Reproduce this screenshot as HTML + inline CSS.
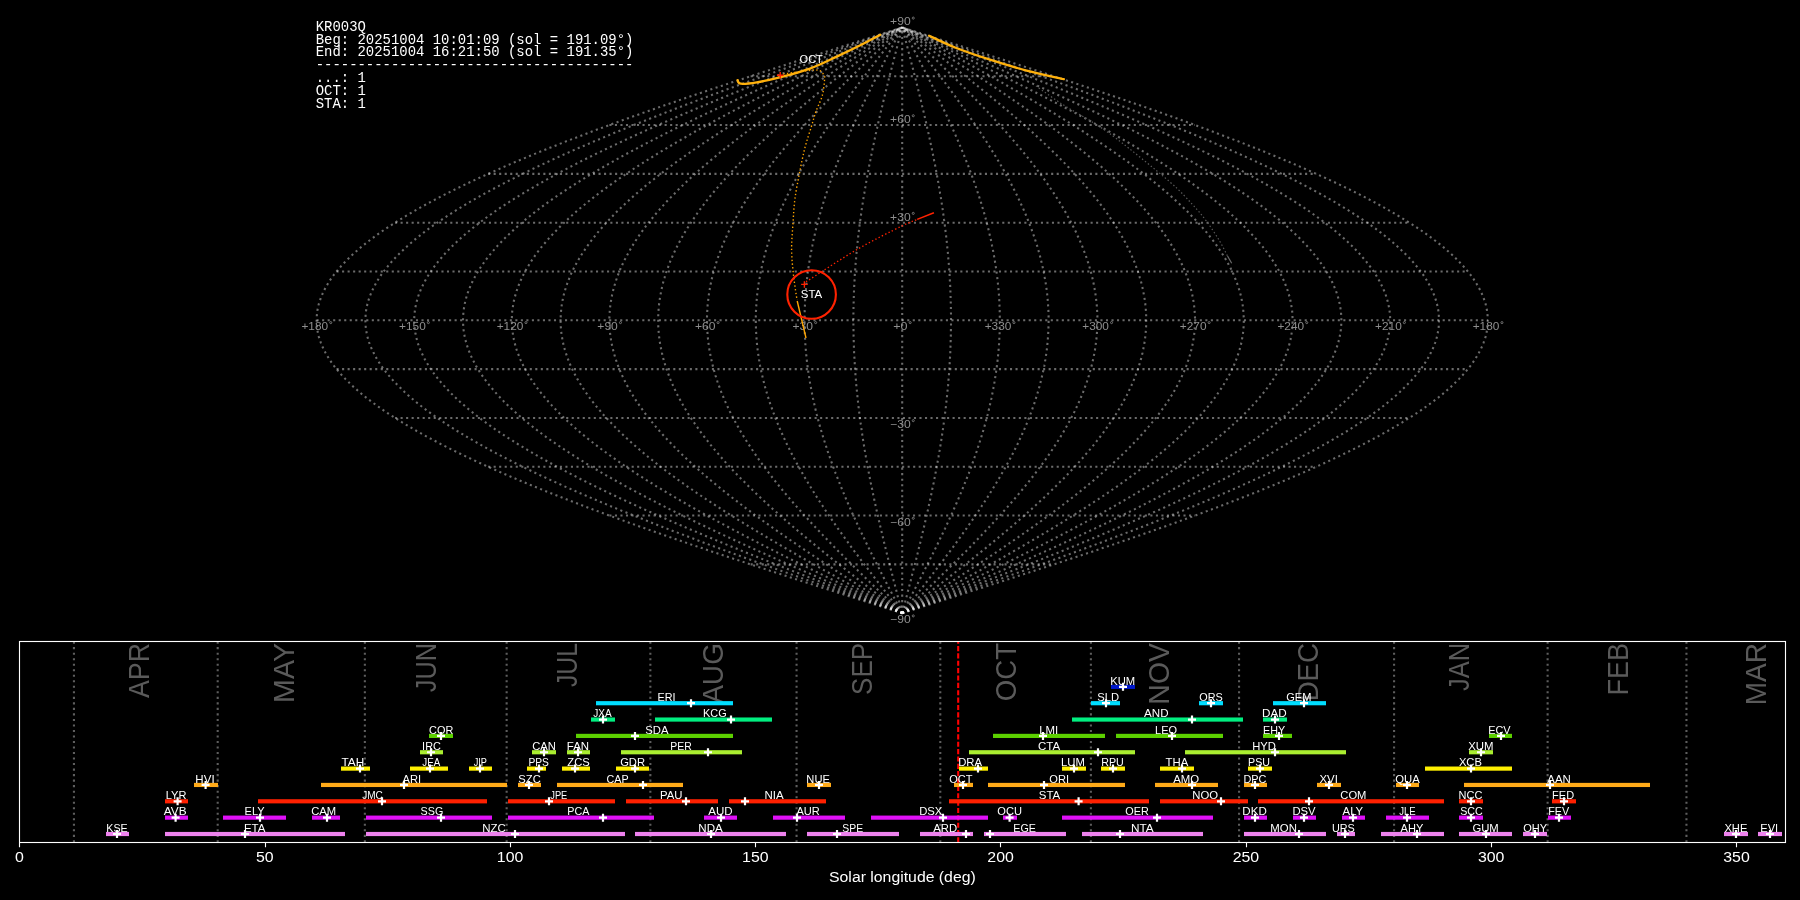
<!DOCTYPE html>
<html><head><meta charset="utf-8"><title>KR003Q</title>
<style>html,body{margin:0;padding:0;background:#000;overflow:hidden}svg{display:block;will-change:transform}</style></head>
<body><svg width="1800" height="900" viewBox="0 0 1800 900">
<rect width="1800" height="900" fill="#000"/>
<g fill="none" stroke="#ffffff" stroke-opacity="0.42" stroke-width="2.083" stroke-dasharray="2.083 3.437"><polyline points="902.2,613.2 912.4,609.9 922.6,606.7 932.8,603.4 943.0,600.2 953.2,596.9 963.4,593.7 973.6,590.4 983.7,587.2 993.8,583.9 1003.9,580.7 1013.9,577.4 1024.0,574.1 1033.9,570.9 1043.9,567.6 1053.8,564.4 1063.6,561.1 1073.4,557.9 1083.2,554.6 1092.9,551.4 1102.5,548.1 1112.1,544.9 1121.6,541.6 1131.0,538.3 1140.4,535.1 1149.7,531.8 1158.9,528.6 1168.1,525.3 1177.1,522.1 1186.1,518.8 1195.0,515.6 1203.8,512.3 1212.5,509.1 1221.1,505.8 1229.7,502.5 1238.1,499.3 1246.4,496.0 1254.6,492.8 1262.7,489.5 1270.7,486.3 1278.6,483.0 1286.4,479.8 1294.0,476.5 1301.6,473.3 1309.0,470.0 1316.3,466.8 1323.4,463.5 1330.5,460.2 1337.4,457.0 1344.2,453.7 1350.8,450.5 1357.3,447.2 1363.7,444.0 1369.9,440.7 1376.0,437.5 1381.9,434.2 1387.7,431.0 1393.3,427.7 1398.8,424.4 1404.2,421.2 1409.3,417.9 1414.4,414.7 1419.3,411.4 1424.0,408.2 1428.5,404.9 1432.9,401.7 1437.2,398.4 1441.2,395.2 1445.2,391.9 1448.9,388.6 1452.5,385.4 1455.9,382.1 1459.1,378.9 1462.2,375.6 1465.1,372.4 1467.8,369.1 1470.4,365.9 1472.8,362.6 1475.0,359.4 1477.0,356.1 1478.9,352.8 1480.6,349.6 1482.1,346.3 1483.4,343.1 1484.6,339.8 1485.6,336.6 1486.4,333.3 1487.0,330.1 1487.4,326.8 1487.7,323.6 1487.8,320.3 1487.7,317.0 1487.4,313.8 1487.0,310.5 1486.4,307.3 1485.6,304.0 1484.6,300.8 1483.4,297.5 1482.1,294.3 1480.6,291.0 1478.9,287.8 1477.0,284.5 1475.0,281.2 1472.8,278.0 1470.4,274.7 1467.8,271.5 1465.1,268.2 1462.2,265.0 1459.1,261.7 1455.9,258.5 1452.5,255.2 1448.9,252.0 1445.2,248.7 1441.2,245.4 1437.2,242.2 1432.9,238.9 1428.5,235.7 1424.0,232.4 1419.3,229.2 1414.4,225.9 1409.3,222.7 1404.2,219.4 1398.8,216.2 1393.3,212.9 1387.7,209.6 1381.9,206.4 1376.0,203.1 1369.9,199.9 1363.7,196.6 1357.3,193.4 1350.8,190.1 1344.2,186.9 1337.4,183.6 1330.5,180.4 1323.4,177.1 1316.3,173.9 1309.0,170.6 1301.6,167.3 1294.0,164.1 1286.4,160.8 1278.6,157.6 1270.7,154.3 1262.7,151.1 1254.6,147.8 1246.4,144.6 1238.1,141.3 1229.7,138.1 1221.1,134.8 1212.5,131.5 1203.8,128.3 1195.0,125.0 1186.1,121.8 1177.1,118.5 1168.1,115.3 1158.9,112.0 1149.7,108.8 1140.4,105.5 1131.0,102.3 1121.6,99.0 1112.1,95.7 1102.5,92.5 1092.9,89.2 1083.2,86.0 1073.4,82.7 1063.6,79.5 1053.8,76.2 1043.9,73.0 1033.9,69.7 1024.0,66.5 1013.9,63.2 1003.9,59.9 993.8,56.7 983.7,53.4 973.6,50.2 963.4,46.9 953.2,43.7 943.0,40.4 932.8,37.2 922.6,33.9 912.4,30.7 902.2,27.4"/><polyline points="902.2,613.2 911.6,609.9 920.9,606.7 930.3,603.4 939.6,600.2 949.0,596.9 958.3,593.7 967.6,590.4 976.9,587.2 986.2,583.9 995.4,580.7 1004.6,577.4 1013.8,574.1 1023.0,570.9 1032.1,567.6 1041.1,564.4 1050.2,561.1 1059.1,557.9 1068.1,554.6 1077.0,551.4 1085.8,548.1 1094.6,544.9 1103.3,541.6 1111.9,538.3 1120.5,535.1 1129.1,531.8 1137.5,528.6 1145.9,525.3 1154.2,522.1 1162.4,518.8 1170.6,515.6 1178.7,512.3 1186.7,509.1 1194.6,505.8 1202.4,502.5 1210.1,499.3 1217.7,496.0 1225.3,492.8 1232.7,489.5 1240.0,486.3 1247.2,483.0 1254.4,479.8 1261.4,476.5 1268.3,473.3 1275.1,470.0 1281.8,466.8 1288.3,463.5 1294.8,460.2 1301.1,457.0 1307.3,453.7 1313.4,450.5 1319.4,447.2 1325.2,444.0 1330.9,440.7 1336.5,437.5 1341.9,434.2 1347.2,431.0 1352.4,427.7 1357.4,424.4 1362.3,421.2 1367.1,417.9 1371.7,414.7 1376.2,411.4 1380.5,408.2 1384.7,404.9 1388.7,401.7 1392.6,398.4 1396.3,395.2 1399.9,391.9 1403.3,388.6 1406.6,385.4 1409.8,382.1 1412.7,378.9 1415.5,375.6 1418.2,372.4 1420.7,369.1 1423.1,365.9 1425.2,362.6 1427.3,359.4 1429.1,356.1 1430.8,352.8 1432.4,349.6 1433.8,346.3 1435.0,343.1 1436.1,339.8 1437.0,336.6 1437.7,333.3 1438.3,330.1 1438.7,326.8 1438.9,323.6 1439.0,320.3 1438.9,317.0 1438.7,313.8 1438.3,310.5 1437.7,307.3 1437.0,304.0 1436.1,300.8 1435.0,297.5 1433.8,294.3 1432.4,291.0 1430.8,287.8 1429.1,284.5 1427.3,281.2 1425.2,278.0 1423.1,274.7 1420.7,271.5 1418.2,268.2 1415.5,265.0 1412.7,261.7 1409.8,258.5 1406.6,255.2 1403.3,252.0 1399.9,248.7 1396.3,245.4 1392.6,242.2 1388.7,238.9 1384.7,235.7 1380.5,232.4 1376.2,229.2 1371.7,225.9 1367.1,222.7 1362.3,219.4 1357.4,216.2 1352.4,212.9 1347.2,209.6 1341.9,206.4 1336.5,203.1 1330.9,199.9 1325.2,196.6 1319.4,193.4 1313.4,190.1 1307.3,186.9 1301.1,183.6 1294.8,180.4 1288.3,177.1 1281.8,173.9 1275.1,170.6 1268.3,167.3 1261.4,164.1 1254.4,160.8 1247.2,157.6 1240.0,154.3 1232.7,151.1 1225.3,147.8 1217.7,144.6 1210.1,141.3 1202.4,138.1 1194.6,134.8 1186.7,131.5 1178.7,128.3 1170.6,125.0 1162.4,121.8 1154.2,118.5 1145.9,115.3 1137.5,112.0 1129.1,108.8 1120.5,105.5 1111.9,102.3 1103.3,99.0 1094.6,95.7 1085.8,92.5 1077.0,89.2 1068.1,86.0 1059.1,82.7 1050.2,79.5 1041.1,76.2 1032.1,73.0 1023.0,69.7 1013.8,66.5 1004.6,63.2 995.4,59.9 986.2,56.7 976.9,53.4 967.6,50.2 958.3,46.9 949.0,43.7 939.6,40.4 930.3,37.2 920.9,33.9 911.6,30.7 902.2,27.4"/><polyline points="902.2,613.2 910.7,609.9 919.2,606.7 927.7,603.4 936.2,600.2 944.7,596.9 953.2,593.7 961.7,590.4 970.1,587.2 978.5,583.9 986.9,580.7 995.3,577.4 1003.7,574.1 1012.0,570.9 1020.3,567.6 1028.5,564.4 1036.7,561.1 1044.9,557.9 1053.0,554.6 1061.1,551.4 1069.1,548.1 1077.1,544.9 1085.0,541.6 1092.9,538.3 1100.7,535.1 1108.4,531.8 1116.1,528.6 1123.7,525.3 1131.3,522.1 1138.8,518.8 1146.2,515.6 1153.5,512.3 1160.8,509.1 1168.0,505.8 1175.1,502.5 1182.1,499.3 1189.0,496.0 1195.9,492.8 1202.6,489.5 1209.3,486.3 1215.9,483.0 1222.4,479.8 1228.7,476.5 1235.0,473.3 1241.2,470.0 1247.3,466.8 1253.2,463.5 1259.1,460.2 1264.9,457.0 1270.5,453.7 1276.0,450.5 1281.4,447.2 1286.7,444.0 1291.9,440.7 1297.0,437.5 1301.9,434.2 1306.8,431.0 1311.5,427.7 1316.0,424.4 1320.5,421.2 1324.8,417.9 1329.0,414.7 1333.1,411.4 1337.0,408.2 1340.8,404.9 1344.5,401.7 1348.0,398.4 1351.4,395.2 1354.7,391.9 1357.8,388.6 1360.8,385.4 1363.6,382.1 1366.3,378.9 1368.9,375.6 1371.3,372.4 1373.6,369.1 1375.7,365.9 1377.7,362.6 1379.5,359.4 1381.2,356.1 1382.8,352.8 1384.2,349.6 1385.5,346.3 1386.6,343.1 1387.5,339.8 1388.3,336.6 1389.0,333.3 1389.5,330.1 1389.9,326.8 1390.1,323.6 1390.2,320.3 1390.1,317.0 1389.9,313.8 1389.5,310.5 1389.0,307.3 1388.3,304.0 1387.5,300.8 1386.6,297.5 1385.5,294.3 1384.2,291.0 1382.8,287.8 1381.2,284.5 1379.5,281.2 1377.7,278.0 1375.7,274.7 1373.6,271.5 1371.3,268.2 1368.9,265.0 1366.3,261.7 1363.6,258.5 1360.8,255.2 1357.8,252.0 1354.7,248.7 1351.4,245.4 1348.0,242.2 1344.5,238.9 1340.8,235.7 1337.0,232.4 1333.1,229.2 1329.0,225.9 1324.8,222.7 1320.5,219.4 1316.0,216.2 1311.5,212.9 1306.8,209.6 1301.9,206.4 1297.0,203.1 1291.9,199.9 1286.7,196.6 1281.4,193.4 1276.0,190.1 1270.5,186.9 1264.9,183.6 1259.1,180.4 1253.2,177.1 1247.3,173.9 1241.2,170.6 1235.0,167.3 1228.7,164.1 1222.4,160.8 1215.9,157.6 1209.3,154.3 1202.6,151.1 1195.9,147.8 1189.0,144.6 1182.1,141.3 1175.1,138.1 1168.0,134.8 1160.8,131.5 1153.5,128.3 1146.2,125.0 1138.8,121.8 1131.3,118.5 1123.7,115.3 1116.1,112.0 1108.4,108.8 1100.7,105.5 1092.9,102.3 1085.0,99.0 1077.1,95.7 1069.1,92.5 1061.1,89.2 1053.0,86.0 1044.9,82.7 1036.7,79.5 1028.5,76.2 1020.3,73.0 1012.0,69.7 1003.7,66.5 995.3,63.2 986.9,59.9 978.5,56.7 970.1,53.4 961.7,50.2 953.2,46.9 944.7,43.7 936.2,40.4 927.7,37.2 919.2,33.9 910.7,30.7 902.2,27.4"/><polyline points="902.2,613.2 909.9,609.9 917.5,606.7 925.2,603.4 932.8,600.2 940.5,596.9 948.1,593.7 955.7,590.4 963.3,587.2 970.9,583.9 978.5,580.7 986.0,577.4 993.5,574.1 1001.0,570.9 1008.5,567.6 1015.9,564.4 1023.3,561.1 1030.6,557.9 1037.9,554.6 1045.2,551.4 1052.4,548.1 1059.6,544.9 1066.7,541.6 1073.8,538.3 1080.8,535.1 1087.8,531.8 1094.7,528.6 1101.6,525.3 1108.4,522.1 1115.1,518.8 1121.8,515.6 1128.4,512.3 1134.9,509.1 1141.4,505.8 1147.8,502.5 1154.1,499.3 1160.4,496.0 1166.5,492.8 1172.6,489.5 1178.6,486.3 1184.5,483.0 1190.3,479.8 1196.1,476.5 1201.7,473.3 1207.3,470.0 1212.8,466.8 1218.1,463.5 1223.4,460.2 1228.6,457.0 1233.7,453.7 1238.6,450.5 1243.5,447.2 1248.3,444.0 1253.0,440.7 1257.5,437.5 1262.0,434.2 1266.3,431.0 1270.5,427.7 1274.7,424.4 1278.7,421.2 1282.6,417.9 1286.3,414.7 1290.0,411.4 1293.5,408.2 1297.0,404.9 1300.3,401.7 1303.4,398.4 1306.5,395.2 1309.4,391.9 1312.2,388.6 1314.9,385.4 1317.5,382.1 1319.9,378.9 1322.2,375.6 1324.4,372.4 1326.4,369.1 1328.4,365.9 1330.1,362.6 1331.8,359.4 1333.3,356.1 1334.7,352.8 1336.0,349.6 1337.1,346.3 1338.1,343.1 1339.0,339.8 1339.7,336.6 1340.3,333.3 1340.8,330.1 1341.1,326.8 1341.3,323.6 1341.4,320.3 1341.3,317.0 1341.1,313.8 1340.8,310.5 1340.3,307.3 1339.7,304.0 1339.0,300.8 1338.1,297.5 1337.1,294.3 1336.0,291.0 1334.7,287.8 1333.3,284.5 1331.8,281.2 1330.1,278.0 1328.4,274.7 1326.4,271.5 1324.4,268.2 1322.2,265.0 1319.9,261.7 1317.5,258.5 1314.9,255.2 1312.2,252.0 1309.4,248.7 1306.5,245.4 1303.4,242.2 1300.3,238.9 1297.0,235.7 1293.5,232.4 1290.0,229.2 1286.3,225.9 1282.6,222.7 1278.7,219.4 1274.7,216.2 1270.5,212.9 1266.3,209.6 1262.0,206.4 1257.5,203.1 1253.0,199.9 1248.3,196.6 1243.5,193.4 1238.6,190.1 1233.7,186.9 1228.6,183.6 1223.4,180.4 1218.1,177.1 1212.8,173.9 1207.3,170.6 1201.7,167.3 1196.1,164.1 1190.3,160.8 1184.5,157.6 1178.6,154.3 1172.6,151.1 1166.5,147.8 1160.4,144.6 1154.1,141.3 1147.8,138.1 1141.4,134.8 1134.9,131.5 1128.4,128.3 1121.8,125.0 1115.1,121.8 1108.4,118.5 1101.6,115.3 1094.7,112.0 1087.8,108.8 1080.8,105.5 1073.8,102.3 1066.7,99.0 1059.6,95.7 1052.4,92.5 1045.2,89.2 1037.9,86.0 1030.6,82.7 1023.3,79.5 1015.9,76.2 1008.5,73.0 1001.0,69.7 993.5,66.5 986.0,63.2 978.5,59.9 970.9,56.7 963.3,53.4 955.7,50.2 948.1,46.9 940.5,43.7 932.8,40.4 925.2,37.2 917.5,33.9 909.9,30.7 902.2,27.4"/><polyline points="902.2,613.2 909.0,609.9 915.8,606.7 922.6,603.4 929.4,600.2 936.2,596.9 943.0,593.7 949.8,590.4 956.5,587.2 963.3,583.9 970.0,580.7 976.7,577.4 983.4,574.1 990.0,570.9 996.6,567.6 1003.2,564.4 1009.8,561.1 1016.3,557.9 1022.8,554.6 1029.3,551.4 1035.7,548.1 1042.1,544.9 1048.4,541.6 1054.7,538.3 1061.0,535.1 1067.2,531.8 1073.3,528.6 1079.4,525.3 1085.5,522.1 1091.5,518.8 1097.4,515.6 1103.3,512.3 1109.1,509.1 1114.8,505.8 1120.5,502.5 1126.1,499.3 1131.7,496.0 1137.1,492.8 1142.6,489.5 1147.9,486.3 1153.1,483.0 1158.3,479.8 1163.4,476.5 1168.5,473.3 1173.4,470.0 1178.3,466.8 1183.0,463.5 1187.7,460.2 1192.3,457.0 1196.8,453.7 1201.3,450.5 1205.6,447.2 1209.8,444.0 1214.0,440.7 1218.0,437.5 1222.0,434.2 1225.9,431.0 1229.6,427.7 1233.3,424.4 1236.8,421.2 1240.3,417.9 1243.7,414.7 1246.9,411.4 1250.0,408.2 1253.1,404.9 1256.0,401.7 1258.8,398.4 1261.6,395.2 1264.2,391.9 1266.7,388.6 1269.1,385.4 1271.3,382.1 1273.5,378.9 1275.5,375.6 1277.5,372.4 1279.3,369.1 1281.0,365.9 1282.6,362.6 1284.1,359.4 1285.4,356.1 1286.7,352.8 1287.8,349.6 1288.8,346.3 1289.7,343.1 1290.5,339.8 1291.1,336.6 1291.6,333.3 1292.1,330.1 1292.4,326.8 1292.5,323.6 1292.6,320.3 1292.5,317.0 1292.4,313.8 1292.1,310.5 1291.6,307.3 1291.1,304.0 1290.5,300.8 1289.7,297.5 1288.8,294.3 1287.8,291.0 1286.7,287.8 1285.4,284.5 1284.1,281.2 1282.6,278.0 1281.0,274.7 1279.3,271.5 1277.5,268.2 1275.5,265.0 1273.5,261.7 1271.3,258.5 1269.1,255.2 1266.7,252.0 1264.2,248.7 1261.6,245.4 1258.8,242.2 1256.0,238.9 1253.1,235.7 1250.0,232.4 1246.9,229.2 1243.7,225.9 1240.3,222.7 1236.8,219.4 1233.3,216.2 1229.6,212.9 1225.9,209.6 1222.0,206.4 1218.0,203.1 1214.0,199.9 1209.8,196.6 1205.6,193.4 1201.3,190.1 1196.8,186.9 1192.3,183.6 1187.7,180.4 1183.0,177.1 1178.3,173.9 1173.4,170.6 1168.5,167.3 1163.4,164.1 1158.3,160.8 1153.1,157.6 1147.9,154.3 1142.6,151.1 1137.1,147.8 1131.7,144.6 1126.1,141.3 1120.5,138.1 1114.8,134.8 1109.1,131.5 1103.3,128.3 1097.4,125.0 1091.5,121.8 1085.5,118.5 1079.4,115.3 1073.3,112.0 1067.2,108.8 1061.0,105.5 1054.7,102.3 1048.4,99.0 1042.1,95.7 1035.7,92.5 1029.3,89.2 1022.8,86.0 1016.3,82.7 1009.8,79.5 1003.2,76.2 996.6,73.0 990.0,69.7 983.4,66.5 976.7,63.2 970.0,59.9 963.3,56.7 956.5,53.4 949.8,50.2 943.0,46.9 936.2,43.7 929.4,40.4 922.6,37.2 915.8,33.9 909.0,30.7 902.2,27.4"/><polyline points="902.2,613.2 908.2,609.9 914.1,606.7 920.1,603.4 926.0,600.2 932.0,596.9 937.9,593.7 943.8,590.4 949.7,587.2 955.6,583.9 961.5,580.7 967.4,577.4 973.2,574.1 979.0,570.9 984.8,567.6 990.6,564.4 996.4,561.1 1002.1,557.9 1007.8,554.6 1013.4,551.4 1019.0,548.1 1024.6,544.9 1030.2,541.6 1035.7,538.3 1041.1,535.1 1046.6,531.8 1051.9,528.6 1057.3,525.3 1062.6,522.1 1067.8,518.8 1073.0,515.6 1078.1,512.3 1083.2,509.1 1088.2,505.8 1093.2,502.5 1098.1,499.3 1103.0,496.0 1107.8,492.8 1112.5,489.5 1117.2,486.3 1121.8,483.0 1126.3,479.8 1130.8,476.5 1135.2,473.3 1139.5,470.0 1143.7,466.8 1147.9,463.5 1152.0,460.2 1156.1,457.0 1160.0,453.7 1163.9,450.5 1167.7,447.2 1171.4,444.0 1175.0,440.7 1178.6,437.5 1182.0,434.2 1185.4,431.0 1188.7,427.7 1191.9,424.4 1195.0,421.2 1198.0,417.9 1201.0,414.7 1203.8,411.4 1206.6,408.2 1209.2,404.9 1211.8,401.7 1214.3,398.4 1216.6,395.2 1218.9,391.9 1221.1,388.6 1223.2,385.4 1225.2,382.1 1227.1,378.9 1228.9,375.6 1230.6,372.4 1232.2,369.1 1233.7,365.9 1235.0,362.6 1236.3,359.4 1237.5,356.1 1238.6,352.8 1239.6,349.6 1240.5,346.3 1241.3,343.1 1241.9,339.8 1242.5,336.6 1243.0,333.3 1243.3,330.1 1243.6,326.8 1243.7,323.6 1243.8,320.3 1243.7,317.0 1243.6,313.8 1243.3,310.5 1243.0,307.3 1242.5,304.0 1241.9,300.8 1241.3,297.5 1240.5,294.3 1239.6,291.0 1238.6,287.8 1237.5,284.5 1236.3,281.2 1235.0,278.0 1233.7,274.7 1232.2,271.5 1230.6,268.2 1228.9,265.0 1227.1,261.7 1225.2,258.5 1223.2,255.2 1221.1,252.0 1218.9,248.7 1216.6,245.4 1214.3,242.2 1211.8,238.9 1209.2,235.7 1206.6,232.4 1203.8,229.2 1201.0,225.9 1198.0,222.7 1195.0,219.4 1191.9,216.2 1188.7,212.9 1185.4,209.6 1182.0,206.4 1178.6,203.1 1175.0,199.9 1171.4,196.6 1167.7,193.4 1163.9,190.1 1160.0,186.9 1156.1,183.6 1152.0,180.4 1147.9,177.1 1143.7,173.9 1139.5,170.6 1135.2,167.3 1130.8,164.1 1126.3,160.8 1121.8,157.6 1117.2,154.3 1112.5,151.1 1107.8,147.8 1103.0,144.6 1098.1,141.3 1093.2,138.1 1088.2,134.8 1083.2,131.5 1078.1,128.3 1073.0,125.0 1067.8,121.8 1062.6,118.5 1057.3,115.3 1051.9,112.0 1046.6,108.8 1041.1,105.5 1035.7,102.3 1030.2,99.0 1024.6,95.7 1019.0,92.5 1013.4,89.2 1007.8,86.0 1002.1,82.7 996.4,79.5 990.6,76.2 984.8,73.0 979.0,69.7 973.2,66.5 967.4,63.2 961.5,59.9 955.6,56.7 949.7,53.4 943.8,50.2 937.9,46.9 932.0,43.7 926.0,40.4 920.1,37.2 914.1,33.9 908.2,30.7 902.2,27.4"/><polyline points="902.2,613.2 907.3,609.9 912.4,606.7 917.5,603.4 922.6,600.2 927.7,596.9 932.8,593.7 937.9,590.4 942.9,587.2 948.0,583.9 953.0,580.7 958.1,577.4 963.1,574.1 968.1,570.9 973.0,567.6 978.0,564.4 982.9,561.1 987.8,557.9 992.7,554.6 997.5,551.4 1002.3,548.1 1007.1,544.9 1011.9,541.6 1016.6,538.3 1021.3,535.1 1025.9,531.8 1030.6,528.6 1035.1,525.3 1039.7,522.1 1044.2,518.8 1048.6,515.6 1053.0,512.3 1057.4,509.1 1061.7,505.8 1065.9,502.5 1070.1,499.3 1074.3,496.0 1078.4,492.8 1082.5,489.5 1086.5,486.3 1090.4,483.0 1094.3,479.8 1098.1,476.5 1101.9,473.3 1105.6,470.0 1109.2,466.8 1112.8,463.5 1116.3,460.2 1119.8,457.0 1123.2,453.7 1126.5,450.5 1129.7,447.2 1132.9,444.0 1136.0,440.7 1139.1,437.5 1142.0,434.2 1144.9,431.0 1147.8,427.7 1150.5,424.4 1153.2,421.2 1155.8,417.9 1158.3,414.7 1160.7,411.4 1163.1,408.2 1165.4,404.9 1167.6,401.7 1169.7,398.4 1171.7,395.2 1173.7,391.9 1175.6,388.6 1177.3,385.4 1179.0,382.1 1180.7,378.9 1182.2,375.6 1183.7,372.4 1185.0,369.1 1186.3,365.9 1187.5,362.6 1188.6,359.4 1189.6,356.1 1190.6,352.8 1191.4,349.6 1192.2,346.3 1192.8,343.1 1193.4,339.8 1193.9,336.6 1194.3,333.3 1194.6,330.1 1194.8,326.8 1195.0,323.6 1195.0,320.3 1195.0,317.0 1194.8,313.8 1194.6,310.5 1194.3,307.3 1193.9,304.0 1193.4,300.8 1192.8,297.5 1192.2,294.3 1191.4,291.0 1190.6,287.8 1189.6,284.5 1188.6,281.2 1187.5,278.0 1186.3,274.7 1185.0,271.5 1183.7,268.2 1182.2,265.0 1180.7,261.7 1179.0,258.5 1177.3,255.2 1175.6,252.0 1173.7,248.7 1171.7,245.4 1169.7,242.2 1167.6,238.9 1165.4,235.7 1163.1,232.4 1160.7,229.2 1158.3,225.9 1155.8,222.7 1153.2,219.4 1150.5,216.2 1147.8,212.9 1144.9,209.6 1142.0,206.4 1139.1,203.1 1136.0,199.9 1132.9,196.6 1129.7,193.4 1126.5,190.1 1123.2,186.9 1119.8,183.6 1116.3,180.4 1112.8,177.1 1109.2,173.9 1105.6,170.6 1101.9,167.3 1098.1,164.1 1094.3,160.8 1090.4,157.6 1086.5,154.3 1082.5,151.1 1078.4,147.8 1074.3,144.6 1070.1,141.3 1065.9,138.1 1061.7,134.8 1057.4,131.5 1053.0,128.3 1048.6,125.0 1044.2,121.8 1039.7,118.5 1035.1,115.3 1030.6,112.0 1025.9,108.8 1021.3,105.5 1016.6,102.3 1011.9,99.0 1007.1,95.7 1002.3,92.5 997.5,89.2 992.7,86.0 987.8,82.7 982.9,79.5 978.0,76.2 973.0,73.0 968.1,69.7 963.1,66.5 958.1,63.2 953.0,59.9 948.0,56.7 942.9,53.4 937.9,50.2 932.8,46.9 927.7,43.7 922.6,40.4 917.5,37.2 912.4,33.9 907.3,30.7 902.2,27.4"/><polyline points="902.2,613.2 906.5,609.9 910.7,606.7 915.0,603.4 919.2,600.2 923.5,596.9 927.7,593.7 931.9,590.4 936.2,587.2 940.4,583.9 944.6,580.7 948.8,577.4 952.9,574.1 957.1,570.9 961.2,567.6 965.4,564.4 969.5,561.1 973.5,557.9 977.6,554.6 981.6,551.4 985.7,548.1 989.6,544.9 993.6,541.6 997.5,538.3 1001.4,535.1 1005.3,531.8 1009.2,528.6 1013.0,525.3 1016.8,522.1 1020.5,518.8 1024.2,515.6 1027.9,512.3 1031.5,509.1 1035.1,505.8 1038.6,502.5 1042.2,499.3 1045.6,496.0 1049.0,492.8 1052.4,489.5 1055.8,486.3 1059.0,483.0 1062.3,479.8 1065.5,476.5 1068.6,473.3 1071.7,470.0 1074.7,466.8 1077.7,463.5 1080.7,460.2 1083.5,457.0 1086.3,453.7 1089.1,450.5 1091.8,447.2 1094.5,444.0 1097.1,440.7 1099.6,437.5 1102.1,434.2 1104.5,431.0 1106.8,427.7 1109.1,424.4 1111.3,421.2 1113.5,417.9 1115.6,414.7 1117.6,411.4 1119.6,408.2 1121.5,404.9 1123.3,401.7 1125.1,398.4 1126.8,395.2 1128.4,391.9 1130.0,388.6 1131.5,385.4 1132.9,382.1 1134.3,378.9 1135.5,375.6 1136.7,372.4 1137.9,369.1 1139.0,365.9 1139.9,362.6 1140.9,359.4 1141.7,356.1 1142.5,352.8 1143.2,349.6 1143.8,346.3 1144.4,343.1 1144.9,339.8 1145.3,336.6 1145.6,333.3 1145.9,330.1 1146.1,326.8 1146.2,323.6 1146.2,320.3 1146.2,317.0 1146.1,313.8 1145.9,310.5 1145.6,307.3 1145.3,304.0 1144.9,300.8 1144.4,297.5 1143.8,294.3 1143.2,291.0 1142.5,287.8 1141.7,284.5 1140.9,281.2 1139.9,278.0 1139.0,274.7 1137.9,271.5 1136.7,268.2 1135.5,265.0 1134.3,261.7 1132.9,258.5 1131.5,255.2 1130.0,252.0 1128.4,248.7 1126.8,245.4 1125.1,242.2 1123.3,238.9 1121.5,235.7 1119.6,232.4 1117.6,229.2 1115.6,225.9 1113.5,222.7 1111.3,219.4 1109.1,216.2 1106.8,212.9 1104.5,209.6 1102.1,206.4 1099.6,203.1 1097.1,199.9 1094.5,196.6 1091.8,193.4 1089.1,190.1 1086.3,186.9 1083.5,183.6 1080.7,180.4 1077.7,177.1 1074.7,173.9 1071.7,170.6 1068.6,167.3 1065.5,164.1 1062.3,160.8 1059.0,157.6 1055.8,154.3 1052.4,151.1 1049.0,147.8 1045.6,144.6 1042.2,141.3 1038.6,138.1 1035.1,134.8 1031.5,131.5 1027.9,128.3 1024.2,125.0 1020.5,121.8 1016.8,118.5 1013.0,115.3 1009.2,112.0 1005.3,108.8 1001.4,105.5 997.5,102.3 993.6,99.0 989.6,95.7 985.7,92.5 981.6,89.2 977.6,86.0 973.5,82.7 969.5,79.5 965.4,76.2 961.2,73.0 957.1,69.7 952.9,66.5 948.8,63.2 944.6,59.9 940.4,56.7 936.2,53.4 931.9,50.2 927.7,46.9 923.5,43.7 919.2,40.4 915.0,37.2 910.7,33.9 906.5,30.7 902.2,27.4"/><polyline points="902.2,613.2 905.6,609.9 909.0,606.7 912.4,603.4 915.8,600.2 919.2,596.9 922.6,593.7 926.0,590.4 929.4,587.2 932.7,583.9 936.1,580.7 939.4,577.4 942.8,574.1 946.1,570.9 949.4,567.6 952.7,564.4 956.0,561.1 959.3,557.9 962.5,554.6 965.8,551.4 969.0,548.1 972.2,544.9 975.3,541.6 978.5,538.3 981.6,535.1 984.7,531.8 987.8,528.6 990.8,525.3 993.8,522.1 996.8,518.8 999.8,515.6 1002.7,512.3 1005.6,509.1 1008.5,505.8 1011.4,502.5 1014.2,499.3 1016.9,496.0 1019.7,492.8 1022.4,489.5 1025.0,486.3 1027.7,483.0 1030.3,479.8 1032.8,476.5 1035.3,473.3 1037.8,470.0 1040.2,466.8 1042.6,463.5 1045.0,460.2 1047.3,457.0 1049.5,453.7 1051.7,450.5 1053.9,447.2 1056.0,444.0 1058.1,440.7 1060.1,437.5 1062.1,434.2 1064.0,431.0 1065.9,427.7 1067.7,424.4 1069.5,421.2 1071.2,417.9 1072.9,414.7 1074.6,411.4 1076.1,408.2 1077.6,404.9 1079.1,401.7 1080.5,398.4 1081.9,395.2 1083.2,391.9 1084.4,388.6 1085.6,385.4 1086.8,382.1 1087.8,378.9 1088.9,375.6 1089.8,372.4 1090.7,369.1 1091.6,365.9 1092.4,362.6 1093.1,359.4 1093.8,356.1 1094.4,352.8 1095.0,349.6 1095.5,346.3 1095.9,343.1 1096.3,339.8 1096.7,336.6 1096.9,333.3 1097.1,330.1 1097.3,326.8 1097.4,323.6 1097.4,320.3 1097.4,317.0 1097.3,313.8 1097.1,310.5 1096.9,307.3 1096.7,304.0 1096.3,300.8 1095.9,297.5 1095.5,294.3 1095.0,291.0 1094.4,287.8 1093.8,284.5 1093.1,281.2 1092.4,278.0 1091.6,274.7 1090.7,271.5 1089.8,268.2 1088.9,265.0 1087.8,261.7 1086.8,258.5 1085.6,255.2 1084.4,252.0 1083.2,248.7 1081.9,245.4 1080.5,242.2 1079.1,238.9 1077.6,235.7 1076.1,232.4 1074.6,229.2 1072.9,225.9 1071.2,222.7 1069.5,219.4 1067.7,216.2 1065.9,212.9 1064.0,209.6 1062.1,206.4 1060.1,203.1 1058.1,199.9 1056.0,196.6 1053.9,193.4 1051.7,190.1 1049.5,186.9 1047.3,183.6 1045.0,180.4 1042.6,177.1 1040.2,173.9 1037.8,170.6 1035.3,167.3 1032.8,164.1 1030.3,160.8 1027.7,157.6 1025.0,154.3 1022.4,151.1 1019.7,147.8 1016.9,144.6 1014.2,141.3 1011.4,138.1 1008.5,134.8 1005.6,131.5 1002.7,128.3 999.8,125.0 996.8,121.8 993.8,118.5 990.8,115.3 987.8,112.0 984.7,108.8 981.6,105.5 978.5,102.3 975.3,99.0 972.2,95.7 969.0,92.5 965.8,89.2 962.5,86.0 959.3,82.7 956.0,79.5 952.7,76.2 949.4,73.0 946.1,69.7 942.8,66.5 939.4,63.2 936.1,59.9 932.7,56.7 929.4,53.4 926.0,50.2 922.6,46.9 919.2,43.7 915.8,40.4 912.4,37.2 909.0,33.9 905.6,30.7 902.2,27.4"/><polyline points="902.2,613.2 904.8,609.9 907.3,606.7 909.9,603.4 912.4,600.2 915.0,596.9 917.5,593.7 920.0,590.4 922.6,587.2 925.1,583.9 927.6,580.7 930.1,577.4 932.6,574.1 935.1,570.9 937.6,567.6 940.1,564.4 942.6,561.1 945.0,557.9 947.4,554.6 949.9,551.4 952.3,548.1 954.7,544.9 957.0,541.6 959.4,538.3 961.7,535.1 964.1,531.8 966.4,528.6 968.7,525.3 970.9,522.1 973.2,518.8 975.4,515.6 977.6,512.3 979.8,509.1 981.9,505.8 984.1,502.5 986.2,499.3 988.3,496.0 990.3,492.8 992.3,489.5 994.3,486.3 996.3,483.0 998.2,479.8 1000.2,476.5 1002.0,473.3 1003.9,470.0 1005.7,466.8 1007.5,463.5 1009.3,460.2 1011.0,457.0 1012.7,453.7 1014.3,450.5 1016.0,447.2 1017.6,444.0 1019.1,440.7 1020.6,437.5 1022.1,434.2 1023.6,431.0 1025.0,427.7 1026.4,424.4 1027.7,421.2 1029.0,417.9 1030.2,414.7 1031.5,411.4 1032.6,408.2 1033.8,404.9 1034.9,401.7 1035.9,398.4 1037.0,395.2 1037.9,391.9 1038.9,388.6 1039.8,385.4 1040.6,382.1 1041.4,378.9 1042.2,375.6 1042.9,372.4 1043.6,369.1 1044.3,365.9 1044.8,362.6 1045.4,359.4 1045.9,356.1 1046.4,352.8 1046.8,349.6 1047.2,346.3 1047.5,343.1 1047.8,339.8 1048.0,336.6 1048.2,333.3 1048.4,330.1 1048.5,326.8 1048.6,323.6 1048.6,320.3 1048.6,317.0 1048.5,313.8 1048.4,310.5 1048.2,307.3 1048.0,304.0 1047.8,300.8 1047.5,297.5 1047.2,294.3 1046.8,291.0 1046.4,287.8 1045.9,284.5 1045.4,281.2 1044.8,278.0 1044.3,274.7 1043.6,271.5 1042.9,268.2 1042.2,265.0 1041.4,261.7 1040.6,258.5 1039.8,255.2 1038.9,252.0 1037.9,248.7 1037.0,245.4 1035.9,242.2 1034.9,238.9 1033.8,235.7 1032.6,232.4 1031.5,229.2 1030.2,225.9 1029.0,222.7 1027.7,219.4 1026.4,216.2 1025.0,212.9 1023.6,209.6 1022.1,206.4 1020.6,203.1 1019.1,199.9 1017.6,196.6 1016.0,193.4 1014.3,190.1 1012.7,186.9 1011.0,183.6 1009.3,180.4 1007.5,177.1 1005.7,173.9 1003.9,170.6 1002.0,167.3 1000.2,164.1 998.2,160.8 996.3,157.6 994.3,154.3 992.3,151.1 990.3,147.8 988.3,144.6 986.2,141.3 984.1,138.1 981.9,134.8 979.8,131.5 977.6,128.3 975.4,125.0 973.2,121.8 970.9,118.5 968.7,115.3 966.4,112.0 964.1,108.8 961.7,105.5 959.4,102.3 957.0,99.0 954.7,95.7 952.3,92.5 949.9,89.2 947.4,86.0 945.0,82.7 942.6,79.5 940.1,76.2 937.6,73.0 935.1,69.7 932.6,66.5 930.1,63.2 927.6,59.9 925.1,56.7 922.6,53.4 920.0,50.2 917.5,46.9 915.0,43.7 912.4,40.4 909.9,37.2 907.3,33.9 904.8,30.7 902.2,27.4"/><polyline points="902.2,613.2 903.9,609.9 905.6,606.7 907.3,603.4 909.0,600.2 910.7,596.9 912.4,593.7 914.1,590.4 915.8,587.2 917.5,583.9 919.1,580.7 920.8,577.4 922.5,574.1 924.2,570.9 925.8,567.6 927.5,564.4 929.1,561.1 930.7,557.9 932.4,554.6 934.0,551.4 935.6,548.1 937.2,544.9 938.8,541.6 940.3,538.3 941.9,535.1 943.4,531.8 945.0,528.6 946.5,525.3 948.0,522.1 949.5,518.8 951.0,515.6 952.5,512.3 953.9,509.1 955.4,505.8 956.8,502.5 958.2,499.3 959.6,496.0 960.9,492.8 962.3,489.5 963.6,486.3 964.9,483.0 966.2,479.8 967.5,476.5 968.8,473.3 970.0,470.0 971.2,466.8 972.4,463.5 973.6,460.2 974.7,457.0 975.9,453.7 977.0,450.5 978.0,447.2 979.1,444.0 980.1,440.7 981.2,437.5 982.1,434.2 983.1,431.0 984.1,427.7 985.0,424.4 985.9,421.2 986.7,417.9 987.6,414.7 988.4,411.4 989.2,408.2 989.9,404.9 990.7,401.7 991.4,398.4 992.0,395.2 992.7,391.9 993.3,388.6 993.9,385.4 994.5,382.1 995.0,378.9 995.5,375.6 996.0,372.4 996.5,369.1 996.9,365.9 997.3,362.6 997.7,359.4 998.0,356.1 998.3,352.8 998.6,349.6 998.9,346.3 999.1,343.1 999.3,339.8 999.4,336.6 999.6,333.3 999.7,330.1 999.7,326.8 999.8,323.6 999.8,320.3 999.8,317.0 999.7,313.8 999.7,310.5 999.6,307.3 999.4,304.0 999.3,300.8 999.1,297.5 998.9,294.3 998.6,291.0 998.3,287.8 998.0,284.5 997.7,281.2 997.3,278.0 996.9,274.7 996.5,271.5 996.0,268.2 995.5,265.0 995.0,261.7 994.5,258.5 993.9,255.2 993.3,252.0 992.7,248.7 992.0,245.4 991.4,242.2 990.7,238.9 989.9,235.7 989.2,232.4 988.4,229.2 987.6,225.9 986.7,222.7 985.9,219.4 985.0,216.2 984.1,212.9 983.1,209.6 982.1,206.4 981.2,203.1 980.1,199.9 979.1,196.6 978.0,193.4 977.0,190.1 975.9,186.9 974.7,183.6 973.6,180.4 972.4,177.1 971.2,173.9 970.0,170.6 968.8,167.3 967.5,164.1 966.2,160.8 964.9,157.6 963.6,154.3 962.3,151.1 960.9,147.8 959.6,144.6 958.2,141.3 956.8,138.1 955.4,134.8 953.9,131.5 952.5,128.3 951.0,125.0 949.5,121.8 948.0,118.5 946.5,115.3 945.0,112.0 943.4,108.8 941.9,105.5 940.3,102.3 938.8,99.0 937.2,95.7 935.6,92.5 934.0,89.2 932.4,86.0 930.7,82.7 929.1,79.5 927.5,76.2 925.8,73.0 924.2,69.7 922.5,66.5 920.8,63.2 919.1,59.9 917.5,56.7 915.8,53.4 914.1,50.2 912.4,46.9 910.7,43.7 909.0,40.4 907.3,37.2 905.6,33.9 903.9,30.7 902.2,27.4"/><polyline points="902.2,613.2 903.1,609.9 903.9,606.7 904.8,603.4 905.6,600.2 906.5,596.9 907.3,593.7 908.1,590.4 909.0,587.2 909.8,583.9 910.7,580.7 911.5,577.4 912.3,574.1 913.2,570.9 914.0,567.6 914.8,564.4 915.7,561.1 916.5,557.9 917.3,554.6 918.1,551.4 918.9,548.1 919.7,544.9 920.5,541.6 921.3,538.3 922.0,535.1 922.8,531.8 923.6,528.6 924.4,525.3 925.1,522.1 925.9,518.8 926.6,515.6 927.3,512.3 928.1,509.1 928.8,505.8 929.5,502.5 930.2,499.3 930.9,496.0 931.6,492.8 932.2,489.5 932.9,486.3 933.6,483.0 934.2,479.8 934.9,476.5 935.5,473.3 936.1,470.0 936.7,466.8 937.3,463.5 937.9,460.2 938.5,457.0 939.0,453.7 939.6,450.5 940.1,447.2 940.7,444.0 941.2,440.7 941.7,437.5 942.2,434.2 942.7,431.0 943.1,427.7 943.6,424.4 944.0,421.2 944.5,417.9 944.9,414.7 945.3,411.4 945.7,408.2 946.1,404.9 946.4,401.7 946.8,398.4 947.1,395.2 947.4,391.9 947.8,388.6 948.1,385.4 948.3,382.1 948.6,378.9 948.9,375.6 949.1,372.4 949.3,369.1 949.6,365.9 949.7,362.6 949.9,359.4 950.1,356.1 950.3,352.8 950.4,349.6 950.5,346.3 950.6,343.1 950.7,339.8 950.8,336.6 950.9,333.3 950.9,330.1 951.0,326.8 951.0,323.6 951.0,320.3 951.0,317.0 951.0,313.8 950.9,310.5 950.9,307.3 950.8,304.0 950.7,300.8 950.6,297.5 950.5,294.3 950.4,291.0 950.3,287.8 950.1,284.5 949.9,281.2 949.7,278.0 949.6,274.7 949.3,271.5 949.1,268.2 948.9,265.0 948.6,261.7 948.3,258.5 948.1,255.2 947.8,252.0 947.4,248.7 947.1,245.4 946.8,242.2 946.4,238.9 946.1,235.7 945.7,232.4 945.3,229.2 944.9,225.9 944.5,222.7 944.0,219.4 943.6,216.2 943.1,212.9 942.7,209.6 942.2,206.4 941.7,203.1 941.2,199.9 940.7,196.6 940.1,193.4 939.6,190.1 939.0,186.9 938.5,183.6 937.9,180.4 937.3,177.1 936.7,173.9 936.1,170.6 935.5,167.3 934.9,164.1 934.2,160.8 933.6,157.6 932.9,154.3 932.2,151.1 931.6,147.8 930.9,144.6 930.2,141.3 929.5,138.1 928.8,134.8 928.1,131.5 927.3,128.3 926.6,125.0 925.9,121.8 925.1,118.5 924.4,115.3 923.6,112.0 922.8,108.8 922.0,105.5 921.3,102.3 920.5,99.0 919.7,95.7 918.9,92.5 918.1,89.2 917.3,86.0 916.5,82.7 915.7,79.5 914.8,76.2 914.0,73.0 913.2,69.7 912.3,66.5 911.5,63.2 910.7,59.9 909.8,56.7 909.0,53.4 908.1,50.2 907.3,46.9 906.5,43.7 905.6,40.4 904.8,37.2 903.9,33.9 903.1,30.7 902.2,27.4"/><polyline points="902.2,613.2 902.2,609.9 902.2,606.7 902.2,603.4 902.2,600.2 902.2,596.9 902.2,593.7 902.2,590.4 902.2,587.2 902.2,583.9 902.2,580.7 902.2,577.4 902.2,574.1 902.2,570.9 902.2,567.6 902.2,564.4 902.2,561.1 902.2,557.9 902.2,554.6 902.2,551.4 902.2,548.1 902.2,544.9 902.2,541.6 902.2,538.3 902.2,535.1 902.2,531.8 902.2,528.6 902.2,525.3 902.2,522.1 902.2,518.8 902.2,515.6 902.2,512.3 902.2,509.1 902.2,505.8 902.2,502.5 902.2,499.3 902.2,496.0 902.2,492.8 902.2,489.5 902.2,486.3 902.2,483.0 902.2,479.8 902.2,476.5 902.2,473.3 902.2,470.0 902.2,466.8 902.2,463.5 902.2,460.2 902.2,457.0 902.2,453.7 902.2,450.5 902.2,447.2 902.2,444.0 902.2,440.7 902.2,437.5 902.2,434.2 902.2,431.0 902.2,427.7 902.2,424.4 902.2,421.2 902.2,417.9 902.2,414.7 902.2,411.4 902.2,408.2 902.2,404.9 902.2,401.7 902.2,398.4 902.2,395.2 902.2,391.9 902.2,388.6 902.2,385.4 902.2,382.1 902.2,378.9 902.2,375.6 902.2,372.4 902.2,369.1 902.2,365.9 902.2,362.6 902.2,359.4 902.2,356.1 902.2,352.8 902.2,349.6 902.2,346.3 902.2,343.1 902.2,339.8 902.2,336.6 902.2,333.3 902.2,330.1 902.2,326.8 902.2,323.6 902.2,320.3 902.2,317.0 902.2,313.8 902.2,310.5 902.2,307.3 902.2,304.0 902.2,300.8 902.2,297.5 902.2,294.3 902.2,291.0 902.2,287.8 902.2,284.5 902.2,281.2 902.2,278.0 902.2,274.7 902.2,271.5 902.2,268.2 902.2,265.0 902.2,261.7 902.2,258.5 902.2,255.2 902.2,252.0 902.2,248.7 902.2,245.4 902.2,242.2 902.2,238.9 902.2,235.7 902.2,232.4 902.2,229.2 902.2,225.9 902.2,222.7 902.2,219.4 902.2,216.2 902.2,212.9 902.2,209.6 902.2,206.4 902.2,203.1 902.2,199.9 902.2,196.6 902.2,193.4 902.2,190.1 902.2,186.9 902.2,183.6 902.2,180.4 902.2,177.1 902.2,173.9 902.2,170.6 902.2,167.3 902.2,164.1 902.2,160.8 902.2,157.6 902.2,154.3 902.2,151.1 902.2,147.8 902.2,144.6 902.2,141.3 902.2,138.1 902.2,134.8 902.2,131.5 902.2,128.3 902.2,125.0 902.2,121.8 902.2,118.5 902.2,115.3 902.2,112.0 902.2,108.8 902.2,105.5 902.2,102.3 902.2,99.0 902.2,95.7 902.2,92.5 902.2,89.2 902.2,86.0 902.2,82.7 902.2,79.5 902.2,76.2 902.2,73.0 902.2,69.7 902.2,66.5 902.2,63.2 902.2,59.9 902.2,56.7 902.2,53.4 902.2,50.2 902.2,46.9 902.2,43.7 902.2,40.4 902.2,37.2 902.2,33.9 902.2,30.7 902.2,27.4"/><polyline points="902.2,613.2 901.3,609.9 900.5,606.7 899.6,603.4 898.8,600.2 897.9,596.9 897.1,593.7 896.3,590.4 895.4,587.2 894.6,583.9 893.7,580.7 892.9,577.4 892.1,574.1 891.2,570.9 890.4,567.6 889.6,564.4 888.7,561.1 887.9,557.9 887.1,554.6 886.3,551.4 885.5,548.1 884.7,544.9 883.9,541.6 883.1,538.3 882.4,535.1 881.6,531.8 880.8,528.6 880.0,525.3 879.3,522.1 878.5,518.8 877.8,515.6 877.1,512.3 876.3,509.1 875.6,505.8 874.9,502.5 874.2,499.3 873.5,496.0 872.8,492.8 872.2,489.5 871.5,486.3 870.8,483.0 870.2,479.8 869.5,476.5 868.9,473.3 868.3,470.0 867.7,466.8 867.1,463.5 866.5,460.2 865.9,457.0 865.4,453.7 864.8,450.5 864.3,447.2 863.7,444.0 863.2,440.7 862.7,437.5 862.2,434.2 861.7,431.0 861.3,427.7 860.8,424.4 860.4,421.2 859.9,417.9 859.5,414.7 859.1,411.4 858.7,408.2 858.3,404.9 858.0,401.7 857.6,398.4 857.3,395.2 857.0,391.9 856.6,388.6 856.3,385.4 856.1,382.1 855.8,378.9 855.5,375.6 855.3,372.4 855.1,369.1 854.8,365.9 854.7,362.6 854.5,359.4 854.3,356.1 854.1,352.8 854.0,349.6 853.9,346.3 853.8,343.1 853.7,339.8 853.6,336.6 853.5,333.3 853.5,330.1 853.4,326.8 853.4,323.6 853.4,320.3 853.4,317.0 853.4,313.8 853.5,310.5 853.5,307.3 853.6,304.0 853.7,300.8 853.8,297.5 853.9,294.3 854.0,291.0 854.1,287.8 854.3,284.5 854.5,281.2 854.7,278.0 854.8,274.7 855.1,271.5 855.3,268.2 855.5,265.0 855.8,261.7 856.1,258.5 856.3,255.2 856.6,252.0 857.0,248.7 857.3,245.4 857.6,242.2 858.0,238.9 858.3,235.7 858.7,232.4 859.1,229.2 859.5,225.9 859.9,222.7 860.4,219.4 860.8,216.2 861.3,212.9 861.7,209.6 862.2,206.4 862.7,203.1 863.2,199.9 863.7,196.6 864.3,193.4 864.8,190.1 865.4,186.9 865.9,183.6 866.5,180.4 867.1,177.1 867.7,173.9 868.3,170.6 868.9,167.3 869.5,164.1 870.2,160.8 870.8,157.6 871.5,154.3 872.2,151.1 872.8,147.8 873.5,144.6 874.2,141.3 874.9,138.1 875.6,134.8 876.3,131.5 877.1,128.3 877.8,125.0 878.5,121.8 879.3,118.5 880.0,115.3 880.8,112.0 881.6,108.8 882.4,105.5 883.1,102.3 883.9,99.0 884.7,95.7 885.5,92.5 886.3,89.2 887.1,86.0 887.9,82.7 888.7,79.5 889.6,76.2 890.4,73.0 891.2,69.7 892.1,66.5 892.9,63.2 893.7,59.9 894.6,56.7 895.4,53.4 896.3,50.2 897.1,46.9 897.9,43.7 898.8,40.4 899.6,37.2 900.5,33.9 901.3,30.7 902.2,27.4"/><polyline points="902.2,613.2 900.5,609.9 898.8,606.7 897.1,603.4 895.4,600.2 893.7,596.9 892.0,593.7 890.3,590.4 888.6,587.2 886.9,583.9 885.3,580.7 883.6,577.4 881.9,574.1 880.2,570.9 878.6,567.6 876.9,564.4 875.3,561.1 873.7,557.9 872.0,554.6 870.4,551.4 868.8,548.1 867.2,544.9 865.6,541.6 864.1,538.3 862.5,535.1 861.0,531.8 859.4,528.6 857.9,525.3 856.4,522.1 854.9,518.8 853.4,515.6 851.9,512.3 850.5,509.1 849.0,505.8 847.6,502.5 846.2,499.3 844.8,496.0 843.5,492.8 842.1,489.5 840.8,486.3 839.5,483.0 838.2,479.8 836.9,476.5 835.6,473.3 834.4,470.0 833.2,466.8 832.0,463.5 830.8,460.2 829.7,457.0 828.5,453.7 827.4,450.5 826.4,447.2 825.3,444.0 824.3,440.7 823.2,437.5 822.3,434.2 821.3,431.0 820.3,427.7 819.4,424.4 818.5,421.2 817.7,417.9 816.8,414.7 816.0,411.4 815.2,408.2 814.5,404.9 813.7,401.7 813.0,398.4 812.4,395.2 811.7,391.9 811.1,388.6 810.5,385.4 809.9,382.1 809.4,378.9 808.9,375.6 808.4,372.4 807.9,369.1 807.5,365.9 807.1,362.6 806.7,359.4 806.4,356.1 806.1,352.8 805.8,349.6 805.5,346.3 805.3,343.1 805.1,339.8 805.0,336.6 804.8,333.3 804.7,330.1 804.7,326.8 804.6,323.6 804.6,320.3 804.6,317.0 804.7,313.8 804.7,310.5 804.8,307.3 805.0,304.0 805.1,300.8 805.3,297.5 805.5,294.3 805.8,291.0 806.1,287.8 806.4,284.5 806.7,281.2 807.1,278.0 807.5,274.7 807.9,271.5 808.4,268.2 808.9,265.0 809.4,261.7 809.9,258.5 810.5,255.2 811.1,252.0 811.7,248.7 812.4,245.4 813.0,242.2 813.7,238.9 814.5,235.7 815.2,232.4 816.0,229.2 816.8,225.9 817.7,222.7 818.5,219.4 819.4,216.2 820.3,212.9 821.3,209.6 822.3,206.4 823.2,203.1 824.3,199.9 825.3,196.6 826.4,193.4 827.4,190.1 828.5,186.9 829.7,183.6 830.8,180.4 832.0,177.1 833.2,173.9 834.4,170.6 835.6,167.3 836.9,164.1 838.2,160.8 839.5,157.6 840.8,154.3 842.1,151.1 843.5,147.8 844.8,144.6 846.2,141.3 847.6,138.1 849.0,134.8 850.5,131.5 851.9,128.3 853.4,125.0 854.9,121.8 856.4,118.5 857.9,115.3 859.4,112.0 861.0,108.8 862.5,105.5 864.1,102.3 865.6,99.0 867.2,95.7 868.8,92.5 870.4,89.2 872.0,86.0 873.7,82.7 875.3,79.5 876.9,76.2 878.6,73.0 880.2,69.7 881.9,66.5 883.6,63.2 885.3,59.9 886.9,56.7 888.6,53.4 890.3,50.2 892.0,46.9 893.7,43.7 895.4,40.4 897.1,37.2 898.8,33.9 900.5,30.7 902.2,27.4"/><polyline points="902.2,613.2 899.6,609.9 897.1,606.7 894.5,603.4 892.0,600.2 889.4,596.9 886.9,593.7 884.4,590.4 881.8,587.2 879.3,583.9 876.8,580.7 874.3,577.4 871.8,574.1 869.3,570.9 866.8,567.6 864.3,564.4 861.8,561.1 859.4,557.9 857.0,554.6 854.5,551.4 852.1,548.1 849.7,544.9 847.4,541.6 845.0,538.3 842.7,535.1 840.3,531.8 838.0,528.6 835.7,525.3 833.5,522.1 831.2,518.8 829.0,515.6 826.8,512.3 824.6,509.1 822.5,505.8 820.3,502.5 818.2,499.3 816.1,496.0 814.1,492.8 812.1,489.5 810.1,486.3 808.1,483.0 806.2,479.8 804.2,476.5 802.4,473.3 800.5,470.0 798.7,466.8 796.9,463.5 795.1,460.2 793.4,457.0 791.7,453.7 790.1,450.5 788.4,447.2 786.8,444.0 785.3,440.7 783.8,437.5 782.3,434.2 780.8,431.0 779.4,427.7 778.0,424.4 776.7,421.2 775.4,417.9 774.2,414.7 772.9,411.4 771.8,408.2 770.6,404.9 769.5,401.7 768.5,398.4 767.4,395.2 766.5,391.9 765.5,388.6 764.6,385.4 763.8,382.1 763.0,378.9 762.2,375.6 761.5,372.4 760.8,369.1 760.1,365.9 759.6,362.6 759.0,359.4 758.5,356.1 758.0,352.8 757.6,349.6 757.2,346.3 756.9,343.1 756.6,339.8 756.4,336.6 756.2,333.3 756.0,330.1 755.9,326.8 755.8,323.6 755.8,320.3 755.8,317.0 755.9,313.8 756.0,310.5 756.2,307.3 756.4,304.0 756.6,300.8 756.9,297.5 757.2,294.3 757.6,291.0 758.0,287.8 758.5,284.5 759.0,281.2 759.6,278.0 760.1,274.7 760.8,271.5 761.5,268.2 762.2,265.0 763.0,261.7 763.8,258.5 764.6,255.2 765.5,252.0 766.5,248.7 767.4,245.4 768.5,242.2 769.5,238.9 770.6,235.7 771.8,232.4 772.9,229.2 774.2,225.9 775.4,222.7 776.7,219.4 778.0,216.2 779.4,212.9 780.8,209.6 782.3,206.4 783.8,203.1 785.3,199.9 786.8,196.6 788.4,193.4 790.1,190.1 791.7,186.9 793.4,183.6 795.1,180.4 796.9,177.1 798.7,173.9 800.5,170.6 802.4,167.3 804.2,164.1 806.2,160.8 808.1,157.6 810.1,154.3 812.1,151.1 814.1,147.8 816.1,144.6 818.2,141.3 820.3,138.1 822.5,134.8 824.6,131.5 826.8,128.3 829.0,125.0 831.2,121.8 833.5,118.5 835.7,115.3 838.0,112.0 840.3,108.8 842.7,105.5 845.0,102.3 847.4,99.0 849.7,95.7 852.1,92.5 854.5,89.2 857.0,86.0 859.4,82.7 861.8,79.5 864.3,76.2 866.8,73.0 869.3,69.7 871.8,66.5 874.3,63.2 876.8,59.9 879.3,56.7 881.8,53.4 884.4,50.2 886.9,46.9 889.4,43.7 892.0,40.4 894.5,37.2 897.1,33.9 899.6,30.7 902.2,27.4"/><polyline points="902.2,613.2 898.8,609.9 895.4,606.7 892.0,603.4 888.6,600.2 885.2,596.9 881.8,593.7 878.4,590.4 875.0,587.2 871.7,583.9 868.3,580.7 865.0,577.4 861.6,574.1 858.3,570.9 855.0,567.6 851.7,564.4 848.4,561.1 845.1,557.9 841.9,554.6 838.6,551.4 835.4,548.1 832.2,544.9 829.1,541.6 825.9,538.3 822.8,535.1 819.7,531.8 816.6,528.6 813.6,525.3 810.6,522.1 807.6,518.8 804.6,515.6 801.7,512.3 798.8,509.1 795.9,505.8 793.0,502.5 790.2,499.3 787.5,496.0 784.7,492.8 782.0,489.5 779.4,486.3 776.7,483.0 774.1,479.8 771.6,476.5 769.1,473.3 766.6,470.0 764.2,466.8 761.8,463.5 759.4,460.2 757.1,457.0 754.9,453.7 752.7,450.5 750.5,447.2 748.4,444.0 746.3,440.7 744.3,437.5 742.3,434.2 740.4,431.0 738.5,427.7 736.7,424.4 734.9,421.2 733.2,417.9 731.5,414.7 729.8,411.4 728.3,408.2 726.8,404.9 725.3,401.7 723.9,398.4 722.5,395.2 721.2,391.9 720.0,388.6 718.8,385.4 717.6,382.1 716.6,378.9 715.5,375.6 714.6,372.4 713.7,369.1 712.8,365.9 712.0,362.6 711.3,359.4 710.6,356.1 710.0,352.8 709.4,349.6 708.9,346.3 708.5,343.1 708.1,339.8 707.7,336.6 707.5,333.3 707.3,330.1 707.1,326.8 707.0,323.6 707.0,320.3 707.0,317.0 707.1,313.8 707.3,310.5 707.5,307.3 707.7,304.0 708.1,300.8 708.5,297.5 708.9,294.3 709.4,291.0 710.0,287.8 710.6,284.5 711.3,281.2 712.0,278.0 712.8,274.7 713.7,271.5 714.6,268.2 715.5,265.0 716.6,261.7 717.6,258.5 718.8,255.2 720.0,252.0 721.2,248.7 722.5,245.4 723.9,242.2 725.3,238.9 726.8,235.7 728.3,232.4 729.8,229.2 731.5,225.9 733.2,222.7 734.9,219.4 736.7,216.2 738.5,212.9 740.4,209.6 742.3,206.4 744.3,203.1 746.3,199.9 748.4,196.6 750.5,193.4 752.7,190.1 754.9,186.9 757.1,183.6 759.4,180.4 761.8,177.1 764.2,173.9 766.6,170.6 769.1,167.3 771.6,164.1 774.1,160.8 776.7,157.6 779.4,154.3 782.0,151.1 784.7,147.8 787.5,144.6 790.2,141.3 793.0,138.1 795.9,134.8 798.8,131.5 801.7,128.3 804.6,125.0 807.6,121.8 810.6,118.5 813.6,115.3 816.6,112.0 819.7,108.8 822.8,105.5 825.9,102.3 829.1,99.0 832.2,95.7 835.4,92.5 838.6,89.2 841.9,86.0 845.1,82.7 848.4,79.5 851.7,76.2 855.0,73.0 858.3,69.7 861.6,66.5 865.0,63.2 868.3,59.9 871.7,56.7 875.0,53.4 878.4,50.2 881.8,46.9 885.2,43.7 888.6,40.4 892.0,37.2 895.4,33.9 898.8,30.7 902.2,27.4"/><polyline points="902.2,613.2 897.9,609.9 893.7,606.7 889.4,603.4 885.2,600.2 880.9,596.9 876.7,593.7 872.5,590.4 868.2,587.2 864.0,583.9 859.8,580.7 855.6,577.4 851.5,574.1 847.3,570.9 843.2,567.6 839.0,564.4 834.9,561.1 830.9,557.9 826.8,554.6 822.8,551.4 818.7,548.1 814.8,544.9 810.8,541.6 806.9,538.3 803.0,535.1 799.1,531.8 795.2,528.6 791.4,525.3 787.6,522.1 783.9,518.8 780.2,515.6 776.5,512.3 772.9,509.1 769.3,505.8 765.8,502.5 762.2,499.3 758.8,496.0 755.4,492.8 752.0,489.5 748.6,486.3 745.4,483.0 742.1,479.8 738.9,476.5 735.8,473.3 732.7,470.0 729.7,466.8 726.7,463.5 723.7,460.2 720.9,457.0 718.1,453.7 715.3,450.5 712.6,447.2 709.9,444.0 707.3,440.7 704.8,437.5 702.3,434.2 699.9,431.0 697.6,427.7 695.3,424.4 693.1,421.2 690.9,417.9 688.8,414.7 686.8,411.4 684.8,408.2 682.9,404.9 681.1,401.7 679.3,398.4 677.6,395.2 676.0,391.9 674.4,388.6 672.9,385.4 671.5,382.1 670.1,378.9 668.9,375.6 667.7,372.4 666.5,369.1 665.4,365.9 664.5,362.6 663.5,359.4 662.7,356.1 661.9,352.8 661.2,349.6 660.6,346.3 660.0,343.1 659.5,339.8 659.1,336.6 658.8,333.3 658.5,330.1 658.3,326.8 658.2,323.6 658.2,320.3 658.2,317.0 658.3,313.8 658.5,310.5 658.8,307.3 659.1,304.0 659.5,300.8 660.0,297.5 660.6,294.3 661.2,291.0 661.9,287.8 662.7,284.5 663.5,281.2 664.5,278.0 665.4,274.7 666.5,271.5 667.7,268.2 668.9,265.0 670.1,261.7 671.5,258.5 672.9,255.2 674.4,252.0 676.0,248.7 677.6,245.4 679.3,242.2 681.1,238.9 682.9,235.7 684.8,232.4 686.8,229.2 688.8,225.9 690.9,222.7 693.1,219.4 695.3,216.2 697.6,212.9 699.9,209.6 702.3,206.4 704.8,203.1 707.3,199.9 709.9,196.6 712.6,193.4 715.3,190.1 718.1,186.9 720.9,183.6 723.7,180.4 726.7,177.1 729.7,173.9 732.7,170.6 735.8,167.3 738.9,164.1 742.1,160.8 745.4,157.6 748.6,154.3 752.0,151.1 755.4,147.8 758.8,144.6 762.2,141.3 765.8,138.1 769.3,134.8 772.9,131.5 776.5,128.3 780.2,125.0 783.9,121.8 787.6,118.5 791.4,115.3 795.2,112.0 799.1,108.8 803.0,105.5 806.9,102.3 810.8,99.0 814.8,95.7 818.7,92.5 822.8,89.2 826.8,86.0 830.9,82.7 834.9,79.5 839.0,76.2 843.2,73.0 847.3,69.7 851.5,66.5 855.6,63.2 859.8,59.9 864.0,56.7 868.2,53.4 872.5,50.2 876.7,46.9 880.9,43.7 885.2,40.4 889.4,37.2 893.7,33.9 897.9,30.7 902.2,27.4"/><polyline points="902.2,613.2 897.1,609.9 892.0,606.7 886.9,603.4 881.8,600.2 876.7,596.9 871.6,593.7 866.5,590.4 861.5,587.2 856.4,583.9 851.4,580.7 846.3,577.4 841.3,574.1 836.3,570.9 831.4,567.6 826.4,564.4 821.5,561.1 816.6,557.9 811.7,554.6 806.9,551.4 802.1,548.1 797.3,544.9 792.5,541.6 787.8,538.3 783.1,535.1 778.5,531.8 773.8,528.6 769.3,525.3 764.7,522.1 760.2,518.8 755.8,515.6 751.4,512.3 747.0,509.1 742.7,505.8 738.5,502.5 734.3,499.3 730.1,496.0 726.0,492.8 721.9,489.5 717.9,486.3 714.0,483.0 710.1,479.8 706.3,476.5 702.5,473.3 698.8,470.0 695.2,466.8 691.6,463.5 688.1,460.2 684.6,457.0 681.2,453.7 677.9,450.5 674.7,447.2 671.5,444.0 668.4,440.7 665.3,437.5 662.4,434.2 659.5,431.0 656.6,427.7 653.9,424.4 651.2,421.2 648.6,417.9 646.1,414.7 643.7,411.4 641.3,408.2 639.0,404.9 636.8,401.7 634.7,398.4 632.7,395.2 630.7,391.9 628.8,388.6 627.1,385.4 625.4,382.1 623.7,378.9 622.2,375.6 620.7,372.4 619.4,369.1 618.1,365.9 616.9,362.6 615.8,359.4 614.8,356.1 613.8,352.8 613.0,349.6 612.2,346.3 611.6,343.1 611.0,339.8 610.5,336.6 610.1,333.3 609.8,330.1 609.6,326.8 609.4,323.6 609.4,320.3 609.4,317.0 609.6,313.8 609.8,310.5 610.1,307.3 610.5,304.0 611.0,300.8 611.6,297.5 612.2,294.3 613.0,291.0 613.8,287.8 614.8,284.5 615.8,281.2 616.9,278.0 618.1,274.7 619.4,271.5 620.7,268.2 622.2,265.0 623.7,261.7 625.4,258.5 627.1,255.2 628.8,252.0 630.7,248.7 632.7,245.4 634.7,242.2 636.8,238.9 639.0,235.7 641.3,232.4 643.7,229.2 646.1,225.9 648.6,222.7 651.2,219.4 653.9,216.2 656.6,212.9 659.5,209.6 662.4,206.4 665.3,203.1 668.4,199.9 671.5,196.6 674.7,193.4 677.9,190.1 681.2,186.9 684.6,183.6 688.1,180.4 691.6,177.1 695.2,173.9 698.8,170.6 702.5,167.3 706.3,164.1 710.1,160.8 714.0,157.6 717.9,154.3 721.9,151.1 726.0,147.8 730.1,144.6 734.3,141.3 738.5,138.1 742.7,134.8 747.0,131.5 751.4,128.3 755.8,125.0 760.2,121.8 764.7,118.5 769.3,115.3 773.8,112.0 778.5,108.8 783.1,105.5 787.8,102.3 792.5,99.0 797.3,95.7 802.1,92.5 806.9,89.2 811.7,86.0 816.6,82.7 821.5,79.5 826.4,76.2 831.4,73.0 836.3,69.7 841.3,66.5 846.3,63.2 851.4,59.9 856.4,56.7 861.5,53.4 866.5,50.2 871.6,46.9 876.7,43.7 881.8,40.4 886.9,37.2 892.0,33.9 897.1,30.7 902.2,27.4"/><polyline points="902.2,613.2 896.2,609.9 890.3,606.7 884.3,603.4 878.4,600.2 872.4,596.9 866.5,593.7 860.6,590.4 854.7,587.2 848.8,583.9 842.9,580.7 837.0,577.4 831.2,574.1 825.4,570.9 819.6,567.6 813.8,564.4 808.0,561.1 802.3,557.9 796.6,554.6 791.0,551.4 785.4,548.1 779.8,544.9 774.2,541.6 768.7,538.3 763.3,535.1 757.8,531.8 752.5,528.6 747.1,525.3 741.8,522.1 736.6,518.8 731.4,515.6 726.3,512.3 721.2,509.1 716.2,505.8 711.2,502.5 706.3,499.3 701.4,496.0 696.6,492.8 691.9,489.5 687.2,486.3 682.6,483.0 678.1,479.8 673.6,476.5 669.2,473.3 664.9,470.0 660.7,466.8 656.5,463.5 652.4,460.2 648.3,457.0 644.4,453.7 640.5,450.5 636.7,447.2 633.0,444.0 629.4,440.7 625.8,437.5 622.4,434.2 619.0,431.0 615.7,427.7 612.5,424.4 609.4,421.2 606.4,417.9 603.4,414.7 600.6,411.4 597.8,408.2 595.2,404.9 592.6,401.7 590.1,398.4 587.8,395.2 585.5,391.9 583.3,388.6 581.2,385.4 579.2,382.1 577.3,378.9 575.5,375.6 573.8,372.4 572.2,369.1 570.7,365.9 569.4,362.6 568.1,359.4 566.9,356.1 565.8,352.8 564.8,349.6 563.9,346.3 563.1,343.1 562.5,339.8 561.9,336.6 561.4,333.3 561.1,330.1 560.8,326.8 560.7,323.6 560.6,320.3 560.7,317.0 560.8,313.8 561.1,310.5 561.4,307.3 561.9,304.0 562.5,300.8 563.1,297.5 563.9,294.3 564.8,291.0 565.8,287.8 566.9,284.5 568.1,281.2 569.4,278.0 570.7,274.7 572.2,271.5 573.8,268.2 575.5,265.0 577.3,261.7 579.2,258.5 581.2,255.2 583.3,252.0 585.5,248.7 587.8,245.4 590.1,242.2 592.6,238.9 595.2,235.7 597.8,232.4 600.6,229.2 603.4,225.9 606.4,222.7 609.4,219.4 612.5,216.2 615.7,212.9 619.0,209.6 622.4,206.4 625.8,203.1 629.4,199.9 633.0,196.6 636.7,193.4 640.5,190.1 644.4,186.9 648.3,183.6 652.4,180.4 656.5,177.1 660.7,173.9 664.9,170.6 669.2,167.3 673.6,164.1 678.1,160.8 682.6,157.6 687.2,154.3 691.9,151.1 696.6,147.8 701.4,144.6 706.3,141.3 711.2,138.1 716.2,134.8 721.2,131.5 726.3,128.3 731.4,125.0 736.6,121.8 741.8,118.5 747.1,115.3 752.5,112.0 757.8,108.8 763.3,105.5 768.7,102.3 774.2,99.0 779.8,95.7 785.4,92.5 791.0,89.2 796.6,86.0 802.3,82.7 808.0,79.5 813.8,76.2 819.6,73.0 825.4,69.7 831.2,66.5 837.0,63.2 842.9,59.9 848.8,56.7 854.7,53.4 860.6,50.2 866.5,46.9 872.4,43.7 878.4,40.4 884.3,37.2 890.3,33.9 896.2,30.7 902.2,27.4"/><polyline points="902.2,613.2 895.4,609.9 888.6,606.7 881.8,603.4 875.0,600.2 868.2,596.9 861.4,593.7 854.6,590.4 847.9,587.2 841.1,583.9 834.4,580.7 827.7,577.4 821.0,574.1 814.4,570.9 807.8,567.6 801.2,564.4 794.6,561.1 788.1,557.9 781.6,554.6 775.1,551.4 768.7,548.1 762.3,544.9 756.0,541.6 749.7,538.3 743.4,535.1 737.2,531.8 731.1,528.6 725.0,525.3 718.9,522.1 712.9,518.8 707.0,515.6 701.1,512.3 695.3,509.1 689.6,505.8 683.9,502.5 678.3,499.3 672.7,496.0 667.3,492.8 661.8,489.5 656.5,486.3 651.3,483.0 646.1,479.8 641.0,476.5 635.9,473.3 631.0,470.0 626.1,466.8 621.4,463.5 616.7,460.2 612.1,457.0 607.6,453.7 603.1,450.5 598.8,447.2 594.6,444.0 590.4,440.7 586.4,437.5 582.4,434.2 578.5,431.0 574.8,427.7 571.1,424.4 567.6,421.2 564.1,417.9 560.7,414.7 557.5,411.4 554.4,408.2 551.3,404.9 548.4,401.7 545.6,398.4 542.8,395.2 540.2,391.9 537.7,388.6 535.3,385.4 533.1,382.1 530.9,378.9 528.9,375.6 526.9,372.4 525.1,369.1 523.4,365.9 521.8,362.6 520.3,359.4 519.0,356.1 517.7,352.8 516.6,349.6 515.6,346.3 514.7,343.1 513.9,339.8 513.3,336.6 512.8,333.3 512.3,330.1 512.0,326.8 511.9,323.6 511.8,320.3 511.9,317.0 512.0,313.8 512.3,310.5 512.8,307.3 513.3,304.0 513.9,300.8 514.7,297.5 515.6,294.3 516.6,291.0 517.7,287.8 519.0,284.5 520.3,281.2 521.8,278.0 523.4,274.7 525.1,271.5 526.9,268.2 528.9,265.0 530.9,261.7 533.1,258.5 535.3,255.2 537.7,252.0 540.2,248.7 542.8,245.4 545.6,242.2 548.4,238.9 551.3,235.7 554.4,232.4 557.5,229.2 560.7,225.9 564.1,222.7 567.6,219.4 571.1,216.2 574.8,212.9 578.5,209.6 582.4,206.4 586.4,203.1 590.4,199.9 594.6,196.6 598.8,193.4 603.1,190.1 607.6,186.9 612.1,183.6 616.7,180.4 621.4,177.1 626.1,173.9 631.0,170.6 635.9,167.3 641.0,164.1 646.1,160.8 651.3,157.6 656.5,154.3 661.8,151.1 667.3,147.8 672.7,144.6 678.3,141.3 683.9,138.1 689.6,134.8 695.3,131.5 701.1,128.3 707.0,125.0 712.9,121.8 718.9,118.5 725.0,115.3 731.1,112.0 737.2,108.8 743.4,105.5 749.7,102.3 756.0,99.0 762.3,95.7 768.7,92.5 775.1,89.2 781.6,86.0 788.1,82.7 794.6,79.5 801.2,76.2 807.8,73.0 814.4,69.7 821.0,66.5 827.7,63.2 834.4,59.9 841.1,56.7 847.9,53.4 854.6,50.2 861.4,46.9 868.2,43.7 875.0,40.4 881.8,37.2 888.6,33.9 895.4,30.7 902.2,27.4"/><polyline points="902.2,613.2 894.5,609.9 886.9,606.7 879.2,603.4 871.6,600.2 863.9,596.9 856.3,593.7 848.7,590.4 841.1,587.2 833.5,583.9 825.9,580.7 818.4,577.4 810.9,574.1 803.4,570.9 795.9,567.6 788.5,564.4 781.1,561.1 773.8,557.9 766.5,554.6 759.2,551.4 752.0,548.1 744.8,544.9 737.7,541.6 730.6,538.3 723.6,535.1 716.6,531.8 709.7,528.6 702.8,525.3 696.0,522.1 689.3,518.8 682.6,515.6 676.0,512.3 669.5,509.1 663.0,505.8 656.6,502.5 650.3,499.3 644.0,496.0 637.9,492.8 631.8,489.5 625.8,486.3 619.9,483.0 614.1,479.8 608.3,476.5 602.7,473.3 597.1,470.0 591.6,466.8 586.3,463.5 581.0,460.2 575.8,457.0 570.7,453.7 565.8,450.5 560.9,447.2 556.1,444.0 551.4,440.7 546.9,437.5 542.4,434.2 538.1,431.0 533.9,427.7 529.7,424.4 525.7,421.2 521.8,417.9 518.1,414.7 514.4,411.4 510.9,408.2 507.4,404.9 504.1,401.7 501.0,398.4 497.9,395.2 495.0,391.9 492.2,388.6 489.5,385.4 486.9,382.1 484.5,378.9 482.2,375.6 480.0,372.4 478.0,369.1 476.0,365.9 474.3,362.6 472.6,359.4 471.1,356.1 469.7,352.8 468.4,349.6 467.3,346.3 466.3,343.1 465.4,339.8 464.7,336.6 464.1,333.3 463.6,330.1 463.3,326.8 463.1,323.6 463.0,320.3 463.1,317.0 463.3,313.8 463.6,310.5 464.1,307.3 464.7,304.0 465.4,300.8 466.3,297.5 467.3,294.3 468.4,291.0 469.7,287.8 471.1,284.5 472.6,281.2 474.3,278.0 476.0,274.7 478.0,271.5 480.0,268.2 482.2,265.0 484.5,261.7 486.9,258.5 489.5,255.2 492.2,252.0 495.0,248.7 497.9,245.4 501.0,242.2 504.1,238.9 507.4,235.7 510.9,232.4 514.4,229.2 518.1,225.9 521.8,222.7 525.7,219.4 529.7,216.2 533.9,212.9 538.1,209.6 542.4,206.4 546.9,203.1 551.4,199.9 556.1,196.6 560.9,193.4 565.8,190.1 570.7,186.9 575.8,183.6 581.0,180.4 586.3,177.1 591.6,173.9 597.1,170.6 602.7,167.3 608.3,164.1 614.1,160.8 619.9,157.6 625.8,154.3 631.8,151.1 637.9,147.8 644.0,144.6 650.3,141.3 656.6,138.1 663.0,134.8 669.5,131.5 676.0,128.3 682.6,125.0 689.3,121.8 696.0,118.5 702.8,115.3 709.7,112.0 716.6,108.8 723.6,105.5 730.6,102.3 737.7,99.0 744.8,95.7 752.0,92.5 759.2,89.2 766.5,86.0 773.8,82.7 781.1,79.5 788.5,76.2 795.9,73.0 803.4,69.7 810.9,66.5 818.4,63.2 825.9,59.9 833.5,56.7 841.1,53.4 848.7,50.2 856.3,46.9 863.9,43.7 871.6,40.4 879.2,37.2 886.9,33.9 894.5,30.7 902.2,27.4"/><polyline points="902.2,613.2 893.7,609.9 885.2,606.7 876.7,603.4 868.2,600.2 859.7,596.9 851.2,593.7 842.7,590.4 834.3,587.2 825.9,583.9 817.5,580.7 809.1,577.4 800.7,574.1 792.4,570.9 784.1,567.6 775.9,564.4 767.7,561.1 759.5,557.9 751.4,554.6 743.3,551.4 735.3,548.1 727.3,544.9 719.4,541.6 711.5,538.3 703.7,535.1 696.0,531.8 688.3,528.6 680.7,525.3 673.1,522.1 665.6,518.8 658.2,515.6 650.9,512.3 643.6,509.1 636.4,505.8 629.3,502.5 622.3,499.3 615.4,496.0 608.5,492.8 601.8,489.5 595.1,486.3 588.5,483.0 582.0,479.8 575.7,476.5 569.4,473.3 563.2,470.0 557.1,466.8 551.2,463.5 545.3,460.2 539.5,457.0 533.9,453.7 528.4,450.5 523.0,447.2 517.7,444.0 512.5,440.7 507.4,437.5 502.5,434.2 497.6,431.0 492.9,427.7 488.4,424.4 483.9,421.2 479.6,417.9 475.4,414.7 471.3,411.4 467.4,408.2 463.6,404.9 459.9,401.7 456.4,398.4 453.0,395.2 449.7,391.9 446.6,388.6 443.6,385.4 440.8,382.1 438.1,378.9 435.5,375.6 433.1,372.4 430.8,369.1 428.7,365.9 426.7,362.6 424.9,359.4 423.2,356.1 421.6,352.8 420.2,349.6 418.9,346.3 417.8,343.1 416.9,339.8 416.1,336.6 415.4,333.3 414.9,330.1 414.5,326.8 414.3,323.6 414.2,320.3 414.3,317.0 414.5,313.8 414.9,310.5 415.4,307.3 416.1,304.0 416.9,300.8 417.8,297.5 418.9,294.3 420.2,291.0 421.6,287.8 423.2,284.5 424.9,281.2 426.7,278.0 428.7,274.7 430.8,271.5 433.1,268.2 435.5,265.0 438.1,261.7 440.8,258.5 443.6,255.2 446.6,252.0 449.7,248.7 453.0,245.4 456.4,242.2 459.9,238.9 463.6,235.7 467.4,232.4 471.3,229.2 475.4,225.9 479.6,222.7 483.9,219.4 488.4,216.2 492.9,212.9 497.6,209.6 502.5,206.4 507.4,203.1 512.5,199.9 517.7,196.6 523.0,193.4 528.4,190.1 533.9,186.9 539.5,183.6 545.3,180.4 551.2,177.1 557.1,173.9 563.2,170.6 569.4,167.3 575.7,164.1 582.0,160.8 588.5,157.6 595.1,154.3 601.8,151.1 608.5,147.8 615.4,144.6 622.3,141.3 629.3,138.1 636.4,134.8 643.6,131.5 650.9,128.3 658.2,125.0 665.6,121.8 673.1,118.5 680.7,115.3 688.3,112.0 696.0,108.8 703.7,105.5 711.5,102.3 719.4,99.0 727.3,95.7 735.3,92.5 743.3,89.2 751.4,86.0 759.5,82.7 767.7,79.5 775.9,76.2 784.1,73.0 792.4,69.7 800.7,66.5 809.1,63.2 817.5,59.9 825.9,56.7 834.3,53.4 842.7,50.2 851.2,46.9 859.7,43.7 868.2,40.4 876.7,37.2 885.2,33.9 893.7,30.7 902.2,27.4"/><polyline points="902.2,613.2 892.8,609.9 883.5,606.7 874.1,603.4 864.8,600.2 855.4,596.9 846.1,593.7 836.8,590.4 827.5,587.2 818.2,583.9 809.0,580.7 799.8,577.4 790.6,574.1 781.4,570.9 772.3,567.6 763.3,564.4 754.2,561.1 745.3,557.9 736.3,554.6 727.4,551.4 718.6,548.1 709.8,544.9 701.1,541.6 692.5,538.3 683.9,535.1 675.3,531.8 666.9,528.6 658.5,525.3 650.2,522.1 642.0,518.8 633.8,515.6 625.7,512.3 617.7,509.1 609.8,505.8 602.0,502.5 594.3,499.3 586.7,496.0 579.1,492.8 571.7,489.5 564.4,486.3 557.2,483.0 550.0,479.8 543.0,476.5 536.1,473.3 529.3,470.0 522.6,466.8 516.1,463.5 509.6,460.2 503.3,457.0 497.1,453.7 491.0,450.5 485.0,447.2 479.2,444.0 473.5,440.7 467.9,437.5 462.5,434.2 457.2,431.0 452.0,427.7 447.0,424.4 442.1,421.2 437.3,417.9 432.7,414.7 428.2,411.4 423.9,408.2 419.7,404.9 415.7,401.7 411.8,398.4 408.1,395.2 404.5,391.9 401.1,388.6 397.8,385.4 394.6,382.1 391.7,378.9 388.9,375.6 386.2,372.4 383.7,369.1 381.3,365.9 379.2,362.6 377.1,359.4 375.3,356.1 373.6,352.8 372.0,349.6 370.6,346.3 369.4,343.1 368.3,339.8 367.4,336.6 366.7,333.3 366.1,330.1 365.7,326.8 365.5,323.6 365.4,320.3 365.5,317.0 365.7,313.8 366.1,310.5 366.7,307.3 367.4,304.0 368.3,300.8 369.4,297.5 370.6,294.3 372.0,291.0 373.6,287.8 375.3,284.5 377.1,281.2 379.2,278.0 381.3,274.7 383.7,271.5 386.2,268.2 388.9,265.0 391.7,261.7 394.6,258.5 397.8,255.2 401.1,252.0 404.5,248.7 408.1,245.4 411.8,242.2 415.7,238.9 419.7,235.7 423.9,232.4 428.2,229.2 432.7,225.9 437.3,222.7 442.1,219.4 447.0,216.2 452.0,212.9 457.2,209.6 462.5,206.4 467.9,203.1 473.5,199.9 479.2,196.6 485.0,193.4 491.0,190.1 497.1,186.9 503.3,183.6 509.6,180.4 516.1,177.1 522.6,173.9 529.3,170.6 536.1,167.3 543.0,164.1 550.0,160.8 557.2,157.6 564.4,154.3 571.7,151.1 579.1,147.8 586.7,144.6 594.3,141.3 602.0,138.1 609.8,134.8 617.7,131.5 625.7,128.3 633.8,125.0 642.0,121.8 650.2,118.5 658.5,115.3 666.9,112.0 675.3,108.8 683.9,105.5 692.5,102.3 701.1,99.0 709.8,95.7 718.6,92.5 727.4,89.2 736.3,86.0 745.3,82.7 754.2,79.5 763.3,76.2 772.3,73.0 781.4,69.7 790.6,66.5 799.8,63.2 809.0,59.9 818.2,56.7 827.5,53.4 836.8,50.2 846.1,46.9 855.4,43.7 864.8,40.4 874.1,37.2 883.5,33.9 892.8,30.7 902.2,27.4"/><polyline points="902.2,613.2 892.0,609.9 881.8,606.7 871.6,603.4 861.4,600.2 851.2,596.9 841.0,593.7 830.8,590.4 820.7,587.2 810.6,583.9 800.5,580.7 790.5,577.4 780.4,574.1 770.5,570.9 760.5,567.6 750.6,564.4 740.8,561.1 731.0,557.9 721.2,554.6 711.5,551.4 701.9,548.1 692.3,544.9 682.8,541.6 673.4,538.3 664.0,535.1 654.7,531.8 645.5,528.6 636.3,525.3 627.3,522.1 618.3,518.8 609.4,515.6 600.6,512.3 591.9,509.1 583.3,505.8 574.7,502.5 566.3,499.3 558.0,496.0 549.8,492.8 541.7,489.5 533.7,486.3 525.8,483.0 518.0,479.8 510.4,476.5 502.8,473.3 495.4,470.0 488.1,466.8 481.0,463.5 473.9,460.2 467.0,457.0 460.2,453.7 453.6,450.5 447.1,447.2 440.7,444.0 434.5,440.7 428.4,437.5 422.5,434.2 416.7,431.0 411.1,427.7 405.6,424.4 400.2,421.2 395.1,417.9 390.0,414.7 385.1,411.4 380.4,408.2 375.9,404.9 371.5,401.7 367.2,398.4 363.2,395.2 359.2,391.9 355.5,388.6 351.9,385.4 348.5,382.1 345.3,378.9 342.2,375.6 339.3,372.4 336.6,369.1 334.0,365.9 331.6,362.6 329.4,359.4 327.4,356.1 325.5,352.8 323.8,349.6 322.3,346.3 321.0,343.1 319.8,339.8 318.8,336.6 318.0,333.3 317.4,330.1 317.0,326.8 316.7,323.6 316.6,320.3 316.7,317.0 317.0,313.8 317.4,310.5 318.0,307.3 318.8,304.0 319.8,300.8 321.0,297.5 322.3,294.3 323.8,291.0 325.5,287.8 327.4,284.5 329.4,281.2 331.6,278.0 334.0,274.7 336.6,271.5 339.3,268.2 342.2,265.0 345.3,261.7 348.5,258.5 351.9,255.2 355.5,252.0 359.2,248.7 363.2,245.4 367.2,242.2 371.5,238.9 375.9,235.7 380.4,232.4 385.1,229.2 390.0,225.9 395.1,222.7 400.2,219.4 405.6,216.2 411.1,212.9 416.7,209.6 422.5,206.4 428.4,203.1 434.5,199.9 440.7,196.6 447.1,193.4 453.6,190.1 460.2,186.9 467.0,183.6 473.9,180.4 481.0,177.1 488.1,173.9 495.4,170.6 502.8,167.3 510.4,164.1 518.0,160.8 525.8,157.6 533.7,154.3 541.7,151.1 549.8,147.8 558.0,144.6 566.3,141.3 574.7,138.1 583.3,134.8 591.9,131.5 600.6,128.3 609.4,125.0 618.3,121.8 627.3,118.5 636.3,115.3 645.5,112.0 654.7,108.8 664.0,105.5 673.4,102.3 682.8,99.0 692.3,95.7 701.9,92.5 711.5,89.2 721.2,86.0 731.0,82.7 740.8,79.5 750.6,76.2 760.5,73.0 770.5,69.7 780.4,66.5 790.5,63.2 800.5,59.9 810.6,56.7 820.7,53.4 830.8,50.2 841.0,46.9 851.2,43.7 861.4,40.4 871.6,37.2 881.8,33.9 892.0,30.7 902.2,27.4"/><line x1="750.64" y1="564.38" x2="1053.76" y2="564.38"/><line x1="609.40" y1="515.57" x2="1195.00" y2="515.57"/><line x1="488.12" y1="466.75" x2="1316.28" y2="466.75"/><line x1="395.06" y1="417.93" x2="1409.34" y2="417.93"/><line x1="336.55" y1="369.12" x2="1467.85" y2="369.12"/><line x1="316.60" y1="320.30" x2="1487.80" y2="320.30"/><line x1="336.55" y1="271.48" x2="1467.85" y2="271.48"/><line x1="395.06" y1="222.67" x2="1409.34" y2="222.67"/><line x1="488.12" y1="173.85" x2="1316.28" y2="173.85"/><line x1="609.40" y1="125.03" x2="1195.00" y2="125.03"/><line x1="750.64" y1="76.22" x2="1053.76" y2="76.22"/></g>
<text x="1472.65" y="329.90" font-size="10.6" fill="#8e8e8e" textLength="26.70" lengthAdjust="spacingAndGlyphs" font-family='"Liberation Sans", sans-serif'>+180</text><circle cx="1501.95" cy="322.60" r="1.05" fill="none" stroke="#8e8e8e" stroke-width="0.75"/>
<text x="1375.05" y="329.90" font-size="10.6" fill="#8e8e8e" textLength="26.70" lengthAdjust="spacingAndGlyphs" font-family='"Liberation Sans", sans-serif'>+210</text><circle cx="1404.35" cy="322.60" r="1.05" fill="none" stroke="#8e8e8e" stroke-width="0.75"/>
<text x="1277.45" y="329.90" font-size="10.6" fill="#8e8e8e" textLength="26.70" lengthAdjust="spacingAndGlyphs" font-family='"Liberation Sans", sans-serif'>+240</text><circle cx="1306.75" cy="322.60" r="1.05" fill="none" stroke="#8e8e8e" stroke-width="0.75"/>
<text x="1179.85" y="329.90" font-size="10.6" fill="#8e8e8e" textLength="26.70" lengthAdjust="spacingAndGlyphs" font-family='"Liberation Sans", sans-serif'>+270</text><circle cx="1209.15" cy="322.60" r="1.05" fill="none" stroke="#8e8e8e" stroke-width="0.75"/>
<text x="1082.25" y="329.90" font-size="10.6" fill="#8e8e8e" textLength="26.70" lengthAdjust="spacingAndGlyphs" font-family='"Liberation Sans", sans-serif'>+300</text><circle cx="1111.55" cy="322.60" r="1.05" fill="none" stroke="#8e8e8e" stroke-width="0.75"/>
<text x="984.65" y="329.90" font-size="10.6" fill="#8e8e8e" textLength="26.70" lengthAdjust="spacingAndGlyphs" font-family='"Liberation Sans", sans-serif'>+330</text><circle cx="1013.95" cy="322.60" r="1.05" fill="none" stroke="#8e8e8e" stroke-width="0.75"/>
<text x="893.23" y="329.90" font-size="10.6" fill="#8e8e8e" textLength="14.33" lengthAdjust="spacingAndGlyphs" font-family='"Liberation Sans", sans-serif'>+0</text><circle cx="910.17" cy="322.60" r="1.05" fill="none" stroke="#8e8e8e" stroke-width="0.75"/>
<text x="792.54" y="329.90" font-size="10.6" fill="#8e8e8e" textLength="20.52" lengthAdjust="spacingAndGlyphs" font-family='"Liberation Sans", sans-serif'>+30</text><circle cx="815.66" cy="322.60" r="1.05" fill="none" stroke="#8e8e8e" stroke-width="0.75"/>
<text x="694.94" y="329.90" font-size="10.6" fill="#8e8e8e" textLength="20.52" lengthAdjust="spacingAndGlyphs" font-family='"Liberation Sans", sans-serif'>+60</text><circle cx="718.06" cy="322.60" r="1.05" fill="none" stroke="#8e8e8e" stroke-width="0.75"/>
<text x="597.34" y="329.90" font-size="10.6" fill="#8e8e8e" textLength="20.52" lengthAdjust="spacingAndGlyphs" font-family='"Liberation Sans", sans-serif'>+90</text><circle cx="620.46" cy="322.60" r="1.05" fill="none" stroke="#8e8e8e" stroke-width="0.75"/>
<text x="496.65" y="329.90" font-size="10.6" fill="#8e8e8e" textLength="26.70" lengthAdjust="spacingAndGlyphs" font-family='"Liberation Sans", sans-serif'>+120</text><circle cx="525.95" cy="322.60" r="1.05" fill="none" stroke="#8e8e8e" stroke-width="0.75"/>
<text x="399.05" y="329.90" font-size="10.6" fill="#8e8e8e" textLength="26.70" lengthAdjust="spacingAndGlyphs" font-family='"Liberation Sans", sans-serif'>+150</text><circle cx="428.35" cy="322.60" r="1.05" fill="none" stroke="#8e8e8e" stroke-width="0.75"/>
<text x="301.45" y="329.90" font-size="10.6" fill="#8e8e8e" textLength="26.70" lengthAdjust="spacingAndGlyphs" font-family='"Liberation Sans", sans-serif'>+180</text><circle cx="330.75" cy="322.60" r="1.05" fill="none" stroke="#8e8e8e" stroke-width="0.75"/>
<text x="890.14" y="25.40" font-size="10.6" fill="#8e8e8e" textLength="20.52" lengthAdjust="spacingAndGlyphs" font-family='"Liberation Sans", sans-serif'>+90</text><circle cx="913.26" cy="18.10" r="1.05" fill="none" stroke="#8e8e8e" stroke-width="0.75"/>
<text x="890.14" y="123.03" font-size="10.6" fill="#8e8e8e" textLength="20.52" lengthAdjust="spacingAndGlyphs" font-family='"Liberation Sans", sans-serif'>+60</text><circle cx="913.26" cy="115.73" r="1.05" fill="none" stroke="#8e8e8e" stroke-width="0.75"/>
<text x="890.14" y="220.67" font-size="10.6" fill="#8e8e8e" textLength="20.52" lengthAdjust="spacingAndGlyphs" font-family='"Liberation Sans", sans-serif'>+30</text><circle cx="913.26" cy="213.37" r="1.05" fill="none" stroke="#8e8e8e" stroke-width="0.75"/>
<text x="890.14" y="427.93" font-size="10.6" fill="#8e8e8e" textLength="20.52" lengthAdjust="spacingAndGlyphs" font-family='"Liberation Sans", sans-serif'>−30</text><circle cx="913.26" cy="420.63" r="1.05" fill="none" stroke="#8e8e8e" stroke-width="0.75"/>
<text x="890.14" y="525.57" font-size="10.6" fill="#8e8e8e" textLength="20.52" lengthAdjust="spacingAndGlyphs" font-family='"Liberation Sans", sans-serif'>−60</text><circle cx="913.26" cy="518.27" r="1.05" fill="none" stroke="#8e8e8e" stroke-width="0.75"/>
<text x="890.14" y="623.20" font-size="10.6" fill="#8e8e8e" textLength="20.52" lengthAdjust="spacingAndGlyphs" font-family='"Liberation Sans", sans-serif'>−90</text><circle cx="913.26" cy="615.90" r="1.05" fill="none" stroke="#8e8e8e" stroke-width="0.75"/>
<path d="M737.60,80.10 C738.12,80.70 737.52,83.33 740.70,83.70 C743.88,84.07 750.18,83.35 756.70,82.30 C763.22,81.25 770.92,79.68 779.80,77.40 C788.68,75.12 800.52,72.07 810.00,68.60 C819.48,65.13 827.82,60.75 836.70,56.60 C845.58,52.45 856.05,47.33 863.30,43.70 C870.55,40.07 877.38,36.28 880.20,34.80" fill="none" stroke="#ffb10c" stroke-width="2.3" stroke-linecap="round"/>
<path d="M929.10,35.70 C933.32,37.62 944.25,43.20 954.40,47.20 C964.55,51.20 978.13,55.85 990.00,59.70 C1001.87,63.55 1013.30,67.05 1025.60,70.30 C1037.90,73.55 1057.43,77.72 1063.80,79.20" fill="none" stroke="#ffb10c" stroke-width="2.3" stroke-linecap="round"/>
<path d="M783.30,74.00 C786.15,73.62 794.70,72.35 800.40,71.70 C806.10,71.05 813.60,69.58 817.50,70.10 C821.40,70.62 822.63,73.12 823.80,74.80 C824.97,76.48 824.77,76.70 824.50,80.20 C824.23,83.70 823.62,90.62 822.20,95.80 C820.78,100.98 817.82,106.12 816.00,111.30 C814.18,116.48 813.12,120.93 811.30,126.90 C809.48,132.87 807.03,139.58 805.10,147.10 C803.17,154.62 801.38,163.45 799.70,172.00 C798.02,180.55 796.12,189.90 795.00,198.40 C793.88,206.90 793.57,214.40 793.00,223.00 C792.43,231.60 791.50,241.17 791.60,250.00 C791.70,258.83 792.70,267.67 793.60,276.00 C794.50,284.33 796.43,296.00 797.00,300.00" fill="none" stroke="#ffa500" stroke-width="1.389" stroke-dasharray="1.389 2.292"/>
<line x1="797.2" y1="301" x2="806" y2="338" stroke="#ffa500" stroke-width="1.389"/>
<path d="M806.10,281.70 C814.62,276.32 841.27,258.67 857.20,249.40 C873.13,240.13 891.70,231.10 901.70,226.10 C911.70,221.10 914.62,220.52 917.20,219.40" fill="none" stroke="#ff2200" stroke-width="1.389" stroke-dasharray="1.389 2.292"/>
<line x1="917.2" y1="219.4" x2="933.9" y2="212.8" stroke="#ff2200" stroke-width="1.528"/>
<circle cx="811.6" cy="294.5" r="24.3" fill="none" stroke="#ff2200" stroke-width="2.1"/>
<path d="M801.15,284.40H807.65M804.40,281.15V287.65" stroke="#ff2200" stroke-width="1.4"/>
<path d="M776.95,75.20H783.45M780.20,71.95V78.45" stroke="#ff2200" stroke-width="1.4"/>
<text x="811.50" y="298.20" font-size="11.11" fill="#fff" text-anchor="middle" textLength="21.44" lengthAdjust="spacingAndGlyphs" font-family='"Liberation Sans", sans-serif' >STA</text>
<text x="811.20" y="62.80" font-size="11.11" fill="#fff" text-anchor="middle" textLength="23.29" lengthAdjust="spacingAndGlyphs" font-family='"Liberation Sans", sans-serif' >OCT</text>
<path d="M1036.00,86.00 C1040.50,89.12 1054.00,98.92 1063.00,104.70 C1072.00,110.48 1081.00,114.98 1090.00,120.70 C1099.00,126.42 1103.75,128.85 1117.00,139.00 C1130.25,149.15 1156.88,170.63 1169.50,181.60 C1182.12,192.57 1186.55,198.22 1192.70,204.80 C1198.85,211.38 1202.02,215.23 1206.40,221.10 C1210.78,226.97 1215.48,234.18 1219.00,240.00 C1222.52,245.82 1226.08,253.33 1227.50,256.00" fill="none" stroke="#5a5a5a" stroke-width="1.2" stroke-dasharray="1.39 2.29"/>
<line x1="1227.5" y1="256" x2="1231.7" y2="263.3" stroke="#6a6a6a" stroke-width="1.2"/>
<text x="315.7" y="30.80" font-size="13.89" fill="#fff" textLength="50.17" lengthAdjust="spacingAndGlyphs" font-family='"Liberation Mono", monospace' xml:space="preserve">KR003Q</text>
<text x="315.7" y="43.63" font-size="13.89" fill="#fff" textLength="317.75" lengthAdjust="spacingAndGlyphs" font-family='"Liberation Mono", monospace' xml:space="preserve">Beg: 20251004 10:01:09 (sol = 191.09°)</text>
<text x="315.7" y="56.46" font-size="13.89" fill="#fff" textLength="317.75" lengthAdjust="spacingAndGlyphs" font-family='"Liberation Mono", monospace' xml:space="preserve">End: 20251004 16:21:50 (sol = 191.35°)</text>
<text x="315.7" y="69.29" font-size="13.89" fill="#fff" textLength="317.75" lengthAdjust="spacingAndGlyphs" font-family='"Liberation Mono", monospace' xml:space="preserve">--------------------------------------</text>
<text x="315.7" y="82.12" font-size="13.89" fill="#fff" textLength="50.17" lengthAdjust="spacingAndGlyphs" font-family='"Liberation Mono", monospace' xml:space="preserve">...: 1</text>
<text x="315.7" y="94.95" font-size="13.89" fill="#fff" textLength="50.17" lengthAdjust="spacingAndGlyphs" font-family='"Liberation Mono", monospace' xml:space="preserve">OCT: 1</text>
<text x="315.7" y="107.78" font-size="13.89" fill="#fff" textLength="50.17" lengthAdjust="spacingAndGlyphs" font-family='"Liberation Mono", monospace' xml:space="preserve">STA: 1</text>
<g stroke="#5e5e5e" stroke-width="2.083" stroke-dasharray="2.083 3.437"><line x1="73.95" y1="842.40" x2="73.95" y2="641.50"/><line x1="217.69" y1="842.40" x2="217.69" y2="641.50"/><line x1="364.86" y1="842.40" x2="364.86" y2="641.50"/><line x1="506.64" y1="842.40" x2="506.64" y2="641.50"/><line x1="650.37" y1="842.40" x2="650.37" y2="641.50"/><line x1="796.56" y1="842.40" x2="796.56" y2="641.50"/><line x1="940.30" y1="842.40" x2="940.30" y2="641.50"/><line x1="1090.90" y1="842.40" x2="1090.90" y2="641.50"/><line x1="1239.06" y1="842.40" x2="1239.06" y2="641.50"/><line x1="1394.08" y1="842.40" x2="1394.08" y2="641.50"/><line x1="1547.62" y1="842.40" x2="1547.62" y2="641.50"/><line x1="1686.45" y1="842.40" x2="1686.45" y2="641.50"/></g>
<defs><clipPath id="ax"><rect x="19" y="641.5" width="1767" height="201"/></clipPath></defs>
<g clip-path="url(#ax)"><text transform="translate(149.24,643) rotate(-90)" x="0" y="0" font-size="30" fill="#5a5a5a" text-anchor="end" textLength="55.05" lengthAdjust="spacingAndGlyphs" font-family='"Liberation Sans", sans-serif'>APR</text><text transform="translate(294.24,643) rotate(-90)" x="0" y="0" font-size="30" fill="#5a5a5a" text-anchor="end" textLength="59.94" lengthAdjust="spacingAndGlyphs" font-family='"Liberation Sans", sans-serif'>MAY</text><text transform="translate(436.24,643) rotate(-90)" x="0" y="0" font-size="30" fill="#5a5a5a" text-anchor="end" textLength="49.30" lengthAdjust="spacingAndGlyphs" font-family='"Liberation Sans", sans-serif'>JUN</text><text transform="translate(576.74,643) rotate(-90)" x="0" y="0" font-size="30" fill="#5a5a5a" text-anchor="end" textLength="44.00" lengthAdjust="spacingAndGlyphs" font-family='"Liberation Sans", sans-serif'>JUL</text><text transform="translate(723.24,643) rotate(-90)" x="0" y="0" font-size="30" fill="#5a5a5a" text-anchor="end" textLength="60.86" lengthAdjust="spacingAndGlyphs" font-family='"Liberation Sans", sans-serif'>AUG</text><text transform="translate(872.24,643) rotate(-90)" x="0" y="0" font-size="30" fill="#5a5a5a" text-anchor="end" textLength="51.93" lengthAdjust="spacingAndGlyphs" font-family='"Liberation Sans", sans-serif'>SEP</text><text transform="translate(1016.24,643) rotate(-90)" x="0" y="0" font-size="30" fill="#5a5a5a" text-anchor="end" textLength="58.23" lengthAdjust="spacingAndGlyphs" font-family='"Liberation Sans", sans-serif'>OCT</text><text transform="translate(1169.24,643) rotate(-90)" x="0" y="0" font-size="30" fill="#5a5a5a" text-anchor="end" textLength="61.65" lengthAdjust="spacingAndGlyphs" font-family='"Liberation Sans", sans-serif'>NOV</text><text transform="translate(1317.74,643) rotate(-90)" x="0" y="0" font-size="30" fill="#5a5a5a" text-anchor="end" textLength="58.34" lengthAdjust="spacingAndGlyphs" font-family='"Liberation Sans", sans-serif'>DEC</text><text transform="translate(1468.74,643) rotate(-90)" x="0" y="0" font-size="30" fill="#5a5a5a" text-anchor="end" textLength="47.97" lengthAdjust="spacingAndGlyphs" font-family='"Liberation Sans", sans-serif'>JAN</text><text transform="translate(1628.24,643) rotate(-90)" x="0" y="0" font-size="30" fill="#5a5a5a" text-anchor="end" textLength="52.59" lengthAdjust="spacingAndGlyphs" font-family='"Liberation Sans", sans-serif'>FEB</text><text transform="translate(1766.24,643) rotate(-90)" x="0" y="0" font-size="30" fill="#5a5a5a" text-anchor="end" textLength="62.27" lengthAdjust="spacingAndGlyphs" font-family='"Liberation Sans", sans-serif'>MAR</text></g>
<line x1="958.2" y1="641.50" x2="958.2" y2="842.40" stroke="#ff0000" stroke-width="2.1" stroke-dasharray="5.14 2.22" stroke-dashoffset="2.86"/>
<rect x="106.0" y="831.92" width="23.0" height="4.17" fill="#ee82ee"/><rect x="165.0" y="831.92" width="180.0" height="4.17" fill="#ee82ee"/><rect x="366.0" y="831.92" width="259.0" height="4.17" fill="#ee82ee"/><rect x="635.0" y="831.92" width="151.0" height="4.17" fill="#ee82ee"/><rect x="807.0" y="831.92" width="92.0" height="4.17" fill="#ee82ee"/><rect x="920.0" y="831.92" width="53.0" height="4.17" fill="#ee82ee"/><rect x="984.0" y="831.92" width="82.0" height="4.17" fill="#ee82ee"/><rect x="1082.0" y="831.92" width="121.0" height="4.17" fill="#ee82ee"/><rect x="1244.0" y="831.92" width="82.0" height="4.17" fill="#ee82ee"/><rect x="1337.0" y="831.92" width="18.0" height="4.17" fill="#ee82ee"/><rect x="1381.0" y="831.92" width="63.0" height="4.17" fill="#ee82ee"/><rect x="1459.0" y="831.92" width="53.0" height="4.17" fill="#ee82ee"/><rect x="1523.0" y="831.92" width="24.0" height="4.17" fill="#ee82ee"/><rect x="1724.0" y="831.92" width="24.0" height="4.17" fill="#ee82ee"/><rect x="1758.0" y="831.92" width="24.0" height="4.17" fill="#ee82ee"/><rect x="165.0" y="815.57" width="23.0" height="4.17" fill="#e010f8"/><rect x="223.0" y="815.57" width="63.0" height="4.17" fill="#e010f8"/><rect x="312.0" y="815.57" width="28.0" height="4.17" fill="#e010f8"/><rect x="366.0" y="815.57" width="126.0" height="4.17" fill="#e010f8"/><rect x="508.0" y="815.57" width="146.0" height="4.17" fill="#e010f8"/><rect x="704.0" y="815.57" width="33.0" height="4.17" fill="#e010f8"/><rect x="773.0" y="815.57" width="72.0" height="4.17" fill="#e010f8"/><rect x="871.0" y="815.57" width="117.0" height="4.17" fill="#e010f8"/><rect x="1003.0" y="815.57" width="14.0" height="4.17" fill="#e010f8"/><rect x="1062.0" y="815.57" width="151.0" height="4.17" fill="#e010f8"/><rect x="1244.0" y="815.57" width="23.0" height="4.17" fill="#e010f8"/><rect x="1293.0" y="815.57" width="23.0" height="4.17" fill="#e010f8"/><rect x="1342.0" y="815.57" width="23.0" height="4.17" fill="#e010f8"/><rect x="1386.0" y="815.57" width="43.0" height="4.17" fill="#e010f8"/><rect x="1459.0" y="815.57" width="24.0" height="4.17" fill="#e010f8"/><rect x="1548.0" y="815.57" width="23.0" height="4.17" fill="#e010f8"/><rect x="165.0" y="799.22" width="23.0" height="4.17" fill="#ff2000"/><rect x="258.0" y="799.22" width="229.0" height="4.17" fill="#ff2000"/><rect x="508.0" y="799.22" width="107.0" height="4.17" fill="#ff2000"/><rect x="626.0" y="799.22" width="92.0" height="4.17" fill="#ff2000"/><rect x="729.0" y="799.22" width="97.0" height="4.17" fill="#ff2000"/><rect x="949.0" y="799.22" width="200.0" height="4.17" fill="#ff2000"/><rect x="1160.0" y="799.22" width="88.0" height="4.17" fill="#ff2000"/><rect x="1258.0" y="799.22" width="186.0" height="4.17" fill="#ff2000"/><rect x="1459.0" y="799.22" width="24.0" height="4.17" fill="#ff2000"/><rect x="1552.0" y="799.22" width="24.0" height="4.17" fill="#ff2000"/><rect x="194.0" y="782.87" width="24.0" height="4.17" fill="#ffaa18"/><rect x="321.0" y="782.87" width="186.0" height="4.17" fill="#ffaa18"/><rect x="518.0" y="782.87" width="23.0" height="4.17" fill="#ffaa18"/><rect x="557.0" y="782.87" width="126.0" height="4.17" fill="#ffaa18"/><rect x="807.0" y="782.87" width="24.0" height="4.17" fill="#ffaa18"/><rect x="954.0" y="782.87" width="19.0" height="4.17" fill="#ffaa18"/><rect x="988.0" y="782.87" width="137.0" height="4.17" fill="#ffaa18"/><rect x="1155.0" y="782.87" width="63.0" height="4.17" fill="#ffaa18"/><rect x="1244.0" y="782.87" width="23.0" height="4.17" fill="#ffaa18"/><rect x="1317.0" y="782.87" width="24.0" height="4.17" fill="#ffaa18"/><rect x="1396.0" y="782.87" width="23.0" height="4.17" fill="#ffaa18"/><rect x="1464.0" y="782.87" width="186.0" height="4.17" fill="#ffaa18"/><rect x="341.0" y="766.52" width="29.0" height="4.17" fill="#fff000"/><rect x="410.0" y="766.52" width="38.0" height="4.17" fill="#fff000"/><rect x="469.0" y="766.52" width="23.0" height="4.17" fill="#fff000"/><rect x="527.0" y="766.52" width="19.0" height="4.17" fill="#fff000"/><rect x="562.0" y="766.52" width="28.0" height="4.17" fill="#fff000"/><rect x="616.0" y="766.52" width="33.0" height="4.17" fill="#fff000"/><rect x="959.0" y="766.52" width="29.0" height="4.17" fill="#fff000"/><rect x="1062.0" y="766.52" width="24.0" height="4.17" fill="#fff000"/><rect x="1101.0" y="766.52" width="24.0" height="4.17" fill="#fff000"/><rect x="1160.0" y="766.52" width="34.0" height="4.17" fill="#fff000"/><rect x="1248.0" y="766.52" width="24.0" height="4.17" fill="#fff000"/><rect x="1425.0" y="766.52" width="87.0" height="4.17" fill="#fff000"/><rect x="420.0" y="750.17" width="23.0" height="4.17" fill="#aaee30"/><rect x="532.0" y="750.17" width="24.0" height="4.17" fill="#aaee30"/><rect x="567.0" y="750.17" width="23.0" height="4.17" fill="#aaee30"/><rect x="621.0" y="750.17" width="121.0" height="4.17" fill="#aaee30"/><rect x="969.0" y="750.17" width="166.0" height="4.17" fill="#aaee30"/><rect x="1185.0" y="750.17" width="161.0" height="4.17" fill="#aaee30"/><rect x="1469.0" y="750.17" width="24.0" height="4.17" fill="#aaee30"/><rect x="429.0" y="733.82" width="24.0" height="4.17" fill="#5cd000"/><rect x="576.0" y="733.82" width="157.0" height="4.17" fill="#5cd000"/><rect x="993.0" y="733.82" width="112.0" height="4.17" fill="#5cd000"/><rect x="1116.0" y="733.82" width="107.0" height="4.17" fill="#5cd000"/><rect x="1263.0" y="733.82" width="29.0" height="4.17" fill="#5cd000"/><rect x="1489.0" y="733.82" width="23.0" height="4.17" fill="#5cd000"/><rect x="591.0" y="717.47" width="24.0" height="4.17" fill="#00ee80"/><rect x="655.0" y="717.47" width="117.0" height="4.17" fill="#00ee80"/><rect x="1072.0" y="717.47" width="171.0" height="4.17" fill="#00ee80"/><rect x="1263.0" y="717.47" width="24.0" height="4.17" fill="#00ee80"/><rect x="596.0" y="701.12" width="137.0" height="4.17" fill="#00ddff"/><rect x="1091.0" y="701.12" width="29.0" height="4.17" fill="#00ddff"/><rect x="1199.0" y="701.12" width="24.0" height="4.17" fill="#00ddff"/><rect x="1273.0" y="701.12" width="53.0" height="4.17" fill="#00ddff"/><rect x="1111.0" y="684.77" width="24.0" height="4.17" fill="#0018cc"/>
<path d="M113.00,834.00H121.00M117.00,830.00V838.00M241.00,834.00H249.00M245.00,830.00V838.00M511.00,834.00H519.00M515.00,830.00V838.00M707.00,834.00H715.00M711.00,830.00V838.00M833.00,834.00H841.00M837.00,830.00V838.00M962.00,834.00H970.00M966.00,830.00V838.00M986.00,834.00H994.00M990.00,830.00V838.00M1116.00,834.00H1124.00M1120.00,830.00V838.00M1295.00,834.00H1303.00M1299.00,830.00V838.00M1341.00,834.00H1349.00M1345.00,830.00V838.00M1413.00,834.00H1421.00M1417.00,830.00V838.00M1482.00,834.00H1490.00M1486.00,830.00V838.00M1531.00,834.00H1539.00M1535.00,830.00V838.00M1732.00,834.00H1740.00M1736.00,830.00V838.00M1766.00,834.00H1774.00M1770.00,830.00V838.00M171.60,817.65H179.60M175.60,813.65V821.65M256.00,817.65H264.00M260.00,813.65V821.65M323.00,817.65H331.00M327.00,813.65V821.65M437.00,817.65H445.00M441.00,813.65V821.65M599.00,817.65H607.00M603.00,813.65V821.65M717.00,817.65H725.00M721.00,813.65V821.65M793.00,817.65H801.00M797.00,813.65V821.65M939.00,817.65H947.00M943.00,813.65V821.65M1005.60,817.65H1013.60M1009.60,813.65V821.65M1153.00,817.65H1161.00M1157.00,813.65V821.65M1251.00,817.65H1259.00M1255.00,813.65V821.65M1300.00,817.65H1308.00M1304.00,813.65V821.65M1349.00,817.65H1357.00M1353.00,813.65V821.65M1403.00,817.65H1411.00M1407.00,813.65V821.65M1467.00,817.65H1475.00M1471.00,813.65V821.65M1555.00,817.65H1563.00M1559.00,813.65V821.65M173.60,801.30H181.60M177.60,797.30V805.30M378.00,801.30H386.00M382.00,797.30V805.30M545.00,801.30H553.00M549.00,797.30V805.30M682.00,801.30H690.00M686.00,797.30V805.30M741.00,801.30H749.00M745.00,797.30V805.30M1074.60,801.30H1082.60M1078.60,797.30V805.30M1217.00,801.30H1225.00M1221.00,797.30V805.30M1305.00,801.30H1313.00M1309.00,797.30V805.30M1467.00,801.30H1475.00M1471.00,797.30V805.30M1560.00,801.30H1568.00M1564.00,797.30V805.30M201.60,784.95H209.60M205.60,780.95V788.95M400.00,784.95H408.00M404.00,780.95V788.95M525.00,784.95H533.00M529.00,780.95V788.95M639.00,784.95H647.00M643.00,780.95V788.95M815.00,784.95H823.00M819.00,780.95V788.95M959.00,784.95H967.00M963.00,780.95V788.95M1040.00,784.95H1048.00M1044.00,780.95V788.95M1188.00,784.95H1196.00M1192.00,780.95V788.95M1251.00,784.95H1259.00M1255.00,780.95V788.95M1325.00,784.95H1333.00M1329.00,780.95V788.95M1403.00,784.95H1411.00M1407.00,780.95V788.95M1546.00,784.95H1554.00M1550.00,780.95V788.95M356.00,768.60H364.00M360.00,764.60V772.60M426.00,768.60H434.00M430.00,764.60V772.60M476.00,768.60H484.00M480.00,764.60V772.60M535.00,768.60H543.00M539.00,764.60V772.60M571.00,768.60H579.00M575.00,764.60V772.60M631.00,768.60H639.00M635.00,764.60V772.60M974.00,768.60H982.00M978.00,764.60V772.60M1070.00,768.60H1078.00M1074.00,764.60V772.60M1109.00,768.60H1117.00M1113.00,764.60V772.60M1178.00,768.60H1186.00M1182.00,764.60V772.60M1256.00,768.60H1264.00M1260.00,764.60V772.60M1467.00,768.60H1475.00M1471.00,764.60V772.60M427.00,752.25H435.00M431.00,748.25V756.25M540.00,752.25H548.00M544.00,748.25V756.25M574.00,752.25H582.00M578.00,748.25V756.25M704.00,752.25H712.00M708.00,748.25V756.25M1094.00,752.25H1102.00M1098.00,748.25V756.25M1271.00,752.25H1279.00M1275.00,748.25V756.25M1477.00,752.25H1485.00M1481.00,748.25V756.25M437.00,735.90H445.00M441.00,731.90V739.90M631.00,735.90H639.00M635.00,731.90V739.90M1039.00,735.90H1047.00M1043.00,731.90V739.90M1168.00,735.90H1176.00M1172.00,731.90V739.90M1275.00,735.90H1283.00M1279.00,731.90V739.90M1497.00,735.90H1505.00M1501.00,731.90V739.90M599.00,719.55H607.00M603.00,715.55V723.55M727.00,719.55H735.00M731.00,715.55V723.55M1188.00,719.55H1196.00M1192.00,715.55V723.55M1271.00,719.55H1279.00M1275.00,715.55V723.55M687.00,703.20H695.00M691.00,699.20V707.20M1102.00,703.20H1110.00M1106.00,699.20V707.20M1207.00,703.20H1215.00M1211.00,699.20V707.20M1300.00,703.20H1308.00M1304.00,699.20V707.20M1119.00,686.85H1127.00M1123.00,682.85V690.85" stroke="#fff" stroke-width="2.2"/>
<text x="117.05" y="831.80" font-size="11.11" fill="#fff" text-anchor="middle" textLength="21.36" lengthAdjust="spacingAndGlyphs" font-family='"Liberation Sans", sans-serif' >KSE</text><text x="254.60" y="831.80" font-size="11.11" fill="#fff" text-anchor="middle" textLength="21.41" lengthAdjust="spacingAndGlyphs" font-family='"Liberation Sans", sans-serif' >ETA</text><text x="494.10" y="831.80" font-size="11.11" fill="#fff" text-anchor="middle" textLength="23.68" lengthAdjust="spacingAndGlyphs" font-family='"Liberation Sans", sans-serif' >NZC</text><text x="710.60" y="831.80" font-size="11.11" fill="#fff" text-anchor="middle" textLength="24.47" lengthAdjust="spacingAndGlyphs" font-family='"Liberation Sans", sans-serif' >NDA</text><text x="852.70" y="831.80" font-size="11.11" fill="#fff" text-anchor="middle" textLength="20.77" lengthAdjust="spacingAndGlyphs" font-family='"Liberation Sans", sans-serif' >SPE</text><text x="945.20" y="831.80" font-size="11.11" fill="#fff" text-anchor="middle" textLength="23.88" lengthAdjust="spacingAndGlyphs" font-family='"Liberation Sans", sans-serif' >ARD</text><text x="1024.60" y="831.80" font-size="11.11" fill="#fff" text-anchor="middle" textLength="22.65" lengthAdjust="spacingAndGlyphs" font-family='"Liberation Sans", sans-serif' >EGE</text><text x="1142.30" y="831.80" font-size="11.11" fill="#fff" text-anchor="middle" textLength="22.70" lengthAdjust="spacingAndGlyphs" font-family='"Liberation Sans", sans-serif' >NTA</text><text x="1283.60" y="831.80" font-size="11.11" fill="#fff" text-anchor="middle" textLength="26.64" lengthAdjust="spacingAndGlyphs" font-family='"Liberation Sans", sans-serif' >MON</text><text x="1343.40" y="831.80" font-size="11.11" fill="#fff" text-anchor="middle" textLength="22.91" lengthAdjust="spacingAndGlyphs" font-family='"Liberation Sans", sans-serif' >URS</text><text x="1411.90" y="831.80" font-size="11.11" fill="#fff" text-anchor="middle" textLength="22.74" lengthAdjust="spacingAndGlyphs" font-family='"Liberation Sans", sans-serif' >AHY</text><text x="1485.60" y="831.80" font-size="11.11" fill="#fff" text-anchor="middle" textLength="26.33" lengthAdjust="spacingAndGlyphs" font-family='"Liberation Sans", sans-serif' >GUM</text><text x="1535.20" y="831.80" font-size="11.11" fill="#fff" text-anchor="middle" textLength="23.89" lengthAdjust="spacingAndGlyphs" font-family='"Liberation Sans", sans-serif' >OHY</text><text x="1735.90" y="831.80" font-size="11.11" fill="#fff" text-anchor="middle" textLength="22.99" lengthAdjust="spacingAndGlyphs" font-family='"Liberation Sans", sans-serif' >XHE</text><text x="1769.20" y="831.80" font-size="11.11" fill="#fff" text-anchor="middle" textLength="17.90" lengthAdjust="spacingAndGlyphs" font-family='"Liberation Sans", sans-serif' >EVI</text><text x="175.20" y="815.45" font-size="11.11" fill="#fff" text-anchor="middle" textLength="22.82" lengthAdjust="spacingAndGlyphs" font-family='"Liberation Sans", sans-serif' >AVB</text><text x="254.60" y="815.45" font-size="11.11" fill="#fff" text-anchor="middle" textLength="20.00" lengthAdjust="spacingAndGlyphs" font-family='"Liberation Sans", sans-serif' >ELY</text><text x="323.60" y="815.45" font-size="11.11" fill="#fff" text-anchor="middle" textLength="24.95" lengthAdjust="spacingAndGlyphs" font-family='"Liberation Sans", sans-serif' >CAM</text><text x="431.90" y="815.45" font-size="11.11" fill="#fff" text-anchor="middle" textLength="22.72" lengthAdjust="spacingAndGlyphs" font-family='"Liberation Sans", sans-serif' >SSG</text><text x="578.30" y="815.45" font-size="11.11" fill="#fff" text-anchor="middle" textLength="22.06" lengthAdjust="spacingAndGlyphs" font-family='"Liberation Sans", sans-serif' >PCA</text><text x="720.40" y="815.45" font-size="11.11" fill="#fff" text-anchor="middle" textLength="24.29" lengthAdjust="spacingAndGlyphs" font-family='"Liberation Sans", sans-serif' >AUD</text><text x="808.10" y="815.45" font-size="11.11" fill="#fff" text-anchor="middle" textLength="23.45" lengthAdjust="spacingAndGlyphs" font-family='"Liberation Sans", sans-serif' >AUR</text><text x="930.80" y="815.45" font-size="11.11" fill="#fff" text-anchor="middle" textLength="23.22" lengthAdjust="spacingAndGlyphs" font-family='"Liberation Sans", sans-serif' >DSX</text><text x="1009.60" y="815.45" font-size="11.11" fill="#fff" text-anchor="middle" textLength="24.64" lengthAdjust="spacingAndGlyphs" font-family='"Liberation Sans", sans-serif' >OCU</text><text x="1137.10" y="815.45" font-size="11.11" fill="#fff" text-anchor="middle" textLength="23.49" lengthAdjust="spacingAndGlyphs" font-family='"Liberation Sans", sans-serif' >OER</text><text x="1254.55" y="815.45" font-size="11.11" fill="#fff" text-anchor="middle" textLength="24.40" lengthAdjust="spacingAndGlyphs" font-family='"Liberation Sans", sans-serif' >DKD</text><text x="1304.00" y="815.45" font-size="11.11" fill="#fff" text-anchor="middle" textLength="23.21" lengthAdjust="spacingAndGlyphs" font-family='"Liberation Sans", sans-serif' >DSV</text><text x="1352.90" y="815.45" font-size="11.11" fill="#fff" text-anchor="middle" textLength="20.58" lengthAdjust="spacingAndGlyphs" font-family='"Liberation Sans", sans-serif' >ALY</text><text x="1407.50" y="815.45" font-size="11.11" fill="#fff" text-anchor="middle" textLength="16.49" lengthAdjust="spacingAndGlyphs" font-family='"Liberation Sans", sans-serif' >JLE</text><text x="1471.50" y="815.45" font-size="11.11" fill="#fff" text-anchor="middle" textLength="22.57" lengthAdjust="spacingAndGlyphs" font-family='"Liberation Sans", sans-serif' >SCC</text><text x="1558.70" y="815.45" font-size="11.11" fill="#fff" text-anchor="middle" textLength="21.01" lengthAdjust="spacingAndGlyphs" font-family='"Liberation Sans", sans-serif' >FEV</text><text x="176.05" y="799.10" font-size="11.11" fill="#fff" text-anchor="middle" textLength="20.70" lengthAdjust="spacingAndGlyphs" font-family='"Liberation Sans", sans-serif' >LYR</text><text x="372.50" y="799.10" font-size="11.11" fill="#fff" text-anchor="middle" textLength="20.62" lengthAdjust="spacingAndGlyphs" font-family='"Liberation Sans", sans-serif' >JMC</text><text x="558.80" y="799.10" font-size="11.11" fill="#fff" text-anchor="middle" textLength="17.00" lengthAdjust="spacingAndGlyphs" font-family='"Liberation Sans", sans-serif' >JPE</text><text x="671.30" y="799.10" font-size="11.11" fill="#fff" text-anchor="middle" textLength="22.43" lengthAdjust="spacingAndGlyphs" font-family='"Liberation Sans", sans-serif' >PAU</text><text x="774.05" y="799.10" font-size="11.11" fill="#fff" text-anchor="middle" textLength="19.19" lengthAdjust="spacingAndGlyphs" font-family='"Liberation Sans", sans-serif' >NIA</text><text x="1049.55" y="799.10" font-size="11.11" fill="#fff" text-anchor="middle" textLength="21.44" lengthAdjust="spacingAndGlyphs" font-family='"Liberation Sans", sans-serif' >STA</text><text x="1205.20" y="799.10" font-size="11.11" fill="#fff" text-anchor="middle" textLength="25.80" lengthAdjust="spacingAndGlyphs" font-family='"Liberation Sans", sans-serif' >NOO</text><text x="1353.40" y="799.10" font-size="11.11" fill="#fff" text-anchor="middle" textLength="26.09" lengthAdjust="spacingAndGlyphs" font-family='"Liberation Sans", sans-serif' >COM</text><text x="1470.50" y="799.10" font-size="11.11" fill="#fff" text-anchor="middle" textLength="23.83" lengthAdjust="spacingAndGlyphs" font-family='"Liberation Sans", sans-serif' >NCC</text><text x="1563.10" y="799.10" font-size="11.11" fill="#fff" text-anchor="middle" textLength="21.97" lengthAdjust="spacingAndGlyphs" font-family='"Liberation Sans", sans-serif' >FED</text><text x="205.00" y="782.75" font-size="11.11" fill="#fff" text-anchor="middle" textLength="19.23" lengthAdjust="spacingAndGlyphs" font-family='"Liberation Sans", sans-serif' >HVI</text><text x="411.90" y="782.75" font-size="11.11" fill="#fff" text-anchor="middle" textLength="18.60" lengthAdjust="spacingAndGlyphs" font-family='"Liberation Sans", sans-serif' >ARI</text><text x="529.60" y="782.75" font-size="11.11" fill="#fff" text-anchor="middle" textLength="22.42" lengthAdjust="spacingAndGlyphs" font-family='"Liberation Sans", sans-serif' >SZC</text><text x="617.60" y="782.75" font-size="11.11" fill="#fff" text-anchor="middle" textLength="22.06" lengthAdjust="spacingAndGlyphs" font-family='"Liberation Sans", sans-serif' >CAP</text><text x="818.10" y="782.75" font-size="11.11" fill="#fff" text-anchor="middle" textLength="23.46" lengthAdjust="spacingAndGlyphs" font-family='"Liberation Sans", sans-serif' >NUE</text><text x="960.80" y="782.75" font-size="11.11" fill="#fff" text-anchor="middle" textLength="23.29" lengthAdjust="spacingAndGlyphs" font-family='"Liberation Sans", sans-serif' >OCT</text><text x="1059.20" y="782.75" font-size="11.11" fill="#fff" text-anchor="middle" textLength="19.74" lengthAdjust="spacingAndGlyphs" font-family='"Liberation Sans", sans-serif' >ORI</text><text x="1186.20" y="782.75" font-size="11.11" fill="#fff" text-anchor="middle" textLength="25.93" lengthAdjust="spacingAndGlyphs" font-family='"Liberation Sans", sans-serif' >AMO</text><text x="1255.00" y="782.75" font-size="11.11" fill="#fff" text-anchor="middle" textLength="23.01" lengthAdjust="spacingAndGlyphs" font-family='"Liberation Sans", sans-serif' >DPC</text><text x="1328.70" y="782.75" font-size="11.11" fill="#fff" text-anchor="middle" textLength="18.49" lengthAdjust="spacingAndGlyphs" font-family='"Liberation Sans", sans-serif' >XVI</text><text x="1407.55" y="782.75" font-size="11.11" fill="#fff" text-anchor="middle" textLength="24.48" lengthAdjust="spacingAndGlyphs" font-family='"Liberation Sans", sans-serif' >QUA</text><text x="1559.10" y="782.75" font-size="11.11" fill="#fff" text-anchor="middle" textLength="23.51" lengthAdjust="spacingAndGlyphs" font-family='"Liberation Sans", sans-serif' >AAN</text><text x="352.90" y="766.40" font-size="11.11" fill="#fff" text-anchor="middle" textLength="22.74" lengthAdjust="spacingAndGlyphs" font-family='"Liberation Sans", sans-serif' >TAH</text><text x="431.30" y="766.40" font-size="11.11" fill="#fff" text-anchor="middle" textLength="17.90" lengthAdjust="spacingAndGlyphs" font-family='"Liberation Sans", sans-serif' >JEA</text><text x="480.30" y="766.40" font-size="11.11" fill="#fff" text-anchor="middle" textLength="13.25" lengthAdjust="spacingAndGlyphs" font-family='"Liberation Sans", sans-serif' >JIP</text><text x="538.60" y="766.40" font-size="11.11" fill="#fff" text-anchor="middle" textLength="20.45" lengthAdjust="spacingAndGlyphs" font-family='"Liberation Sans", sans-serif' >PPS</text><text x="578.60" y="766.40" font-size="11.11" fill="#fff" text-anchor="middle" textLength="22.42" lengthAdjust="spacingAndGlyphs" font-family='"Liberation Sans", sans-serif' >ZCS</text><text x="632.60" y="766.40" font-size="11.11" fill="#fff" text-anchor="middle" textLength="24.89" lengthAdjust="spacingAndGlyphs" font-family='"Liberation Sans", sans-serif' >GDR</text><text x="970.10" y="766.40" font-size="11.11" fill="#fff" text-anchor="middle" textLength="23.88" lengthAdjust="spacingAndGlyphs" font-family='"Liberation Sans", sans-serif' >DRA</text><text x="1072.90" y="766.40" font-size="11.11" fill="#fff" text-anchor="middle" textLength="23.91" lengthAdjust="spacingAndGlyphs" font-family='"Liberation Sans", sans-serif' >LUM</text><text x="1112.55" y="766.40" font-size="11.11" fill="#fff" text-anchor="middle" textLength="22.55" lengthAdjust="spacingAndGlyphs" font-family='"Liberation Sans", sans-serif' >RPU</text><text x="1176.90" y="766.40" font-size="11.11" fill="#fff" text-anchor="middle" textLength="22.74" lengthAdjust="spacingAndGlyphs" font-family='"Liberation Sans", sans-serif' >THA</text><text x="1259.00" y="766.40" font-size="11.11" fill="#fff" text-anchor="middle" textLength="21.89" lengthAdjust="spacingAndGlyphs" font-family='"Liberation Sans", sans-serif' >PSU</text><text x="1470.40" y="766.40" font-size="11.11" fill="#fff" text-anchor="middle" textLength="22.99" lengthAdjust="spacingAndGlyphs" font-family='"Liberation Sans", sans-serif' >XCB</text><text x="431.50" y="750.05" font-size="11.11" fill="#fff" text-anchor="middle" textLength="18.76" lengthAdjust="spacingAndGlyphs" font-family='"Liberation Sans", sans-serif' >IRC</text><text x="544.10" y="750.05" font-size="11.11" fill="#fff" text-anchor="middle" textLength="23.67" lengthAdjust="spacingAndGlyphs" font-family='"Liberation Sans", sans-serif' >CAN</text><text x="578.00" y="750.05" font-size="11.11" fill="#fff" text-anchor="middle" textLength="22.30" lengthAdjust="spacingAndGlyphs" font-family='"Liberation Sans", sans-serif' >FAN</text><text x="681.05" y="750.05" font-size="11.11" fill="#fff" text-anchor="middle" textLength="21.44" lengthAdjust="spacingAndGlyphs" font-family='"Liberation Sans", sans-serif' >PER</text><text x="1049.00" y="750.05" font-size="11.11" fill="#fff" text-anchor="middle" textLength="22.15" lengthAdjust="spacingAndGlyphs" font-family='"Liberation Sans", sans-serif' >CTA</text><text x="1264.00" y="750.05" font-size="11.11" fill="#fff" text-anchor="middle" textLength="23.70" lengthAdjust="spacingAndGlyphs" font-family='"Liberation Sans", sans-serif' >HYD</text><text x="1480.90" y="750.05" font-size="11.11" fill="#fff" text-anchor="middle" textLength="25.33" lengthAdjust="spacingAndGlyphs" font-family='"Liberation Sans", sans-serif' >XUM</text><text x="441.20" y="733.70" font-size="11.11" fill="#fff" text-anchor="middle" textLength="24.22" lengthAdjust="spacingAndGlyphs" font-family='"Liberation Sans", sans-serif' >COR</text><text x="656.90" y="733.70" font-size="11.11" fill="#fff" text-anchor="middle" textLength="23.21" lengthAdjust="spacingAndGlyphs" font-family='"Liberation Sans", sans-serif' >SDA</text><text x="1048.70" y="733.70" font-size="11.11" fill="#fff" text-anchor="middle" textLength="19.05" lengthAdjust="spacingAndGlyphs" font-family='"Liberation Sans", sans-serif' >LMI</text><text x="1166.10" y="733.70" font-size="11.11" fill="#fff" text-anchor="middle" textLength="21.96" lengthAdjust="spacingAndGlyphs" font-family='"Liberation Sans", sans-serif' >LEO</text><text x="1274.20" y="733.70" font-size="11.11" fill="#fff" text-anchor="middle" textLength="22.16" lengthAdjust="spacingAndGlyphs" font-family='"Liberation Sans", sans-serif' >EHY</text><text x="1499.40" y="733.70" font-size="11.11" fill="#fff" text-anchor="middle" textLength="22.38" lengthAdjust="spacingAndGlyphs" font-family='"Liberation Sans", sans-serif' >ECV</text><text x="602.55" y="717.35" font-size="11.11" fill="#fff" text-anchor="middle" textLength="18.49" lengthAdjust="spacingAndGlyphs" font-family='"Liberation Sans", sans-serif' >JXA</text><text x="714.80" y="717.35" font-size="11.11" fill="#fff" text-anchor="middle" textLength="23.65" lengthAdjust="spacingAndGlyphs" font-family='"Liberation Sans", sans-serif' >KCG</text><text x="1156.30" y="717.35" font-size="11.11" fill="#fff" text-anchor="middle" textLength="24.47" lengthAdjust="spacingAndGlyphs" font-family='"Liberation Sans", sans-serif' >AND</text><text x="1274.40" y="717.35" font-size="11.11" fill="#fff" text-anchor="middle" textLength="24.71" lengthAdjust="spacingAndGlyphs" font-family='"Liberation Sans", sans-serif' >DAD</text><text x="666.50" y="701.00" font-size="11.11" fill="#fff" text-anchor="middle" textLength="18.02" lengthAdjust="spacingAndGlyphs" font-family='"Liberation Sans", sans-serif' >ERI</text><text x="1108.10" y="701.00" font-size="11.11" fill="#fff" text-anchor="middle" textLength="21.80" lengthAdjust="spacingAndGlyphs" font-family='"Liberation Sans", sans-serif' >SLD</text><text x="1211.05" y="701.00" font-size="11.11" fill="#fff" text-anchor="middle" textLength="23.52" lengthAdjust="spacingAndGlyphs" font-family='"Liberation Sans", sans-serif' >ORS</text><text x="1298.80" y="701.00" font-size="11.11" fill="#fff" text-anchor="middle" textLength="25.22" lengthAdjust="spacingAndGlyphs" font-family='"Liberation Sans", sans-serif' >GEM</text><text x="1122.70" y="684.65" font-size="11.11" fill="#fff" text-anchor="middle" textLength="25.01" lengthAdjust="spacingAndGlyphs" font-family='"Liberation Sans", sans-serif' >KUM</text>
<rect x="19.5" y="641.5" width="1766" height="201" fill="none" stroke="#fff" stroke-width="1.11"/>
<text x="19.50" y="862.00" font-size="13.89" fill="#fff" text-anchor="middle" textLength="8.84" lengthAdjust="spacingAndGlyphs" font-family='"Liberation Sans", sans-serif' >0</text>
<text x="264.78" y="862.00" font-size="13.89" fill="#fff" text-anchor="middle" textLength="17.67" lengthAdjust="spacingAndGlyphs" font-family='"Liberation Sans", sans-serif' >50</text>
<text x="510.07" y="862.00" font-size="13.89" fill="#fff" text-anchor="middle" textLength="26.51" lengthAdjust="spacingAndGlyphs" font-family='"Liberation Sans", sans-serif' >100</text>
<text x="755.35" y="862.00" font-size="13.89" fill="#fff" text-anchor="middle" textLength="26.51" lengthAdjust="spacingAndGlyphs" font-family='"Liberation Sans", sans-serif' >150</text>
<text x="1000.64" y="862.00" font-size="13.89" fill="#fff" text-anchor="middle" textLength="26.51" lengthAdjust="spacingAndGlyphs" font-family='"Liberation Sans", sans-serif' >200</text>
<text x="1245.92" y="862.00" font-size="13.89" fill="#fff" text-anchor="middle" textLength="26.51" lengthAdjust="spacingAndGlyphs" font-family='"Liberation Sans", sans-serif' >250</text>
<text x="1491.21" y="862.00" font-size="13.89" fill="#fff" text-anchor="middle" textLength="26.51" lengthAdjust="spacingAndGlyphs" font-family='"Liberation Sans", sans-serif' >300</text>
<text x="1736.49" y="862.00" font-size="13.89" fill="#fff" text-anchor="middle" textLength="26.51" lengthAdjust="spacingAndGlyphs" font-family='"Liberation Sans", sans-serif' >350</text>
<path d="M19.50,842.5V847.36M265.50,842.5V847.36M510.50,842.5V847.36M755.50,842.5V847.36M1000.50,842.5V847.36M1246.50,842.5V847.36M1491.50,842.5V847.36M1736.50,842.5V847.36" stroke="#fff" stroke-width="1.11"/>
<text x="902.40" y="881.50" font-size="13.89" fill="#fff" text-anchor="middle" textLength="146.68" lengthAdjust="spacingAndGlyphs" font-family='"Liberation Sans", sans-serif' >Solar longitude (deg)</text>
</svg></body></html>
